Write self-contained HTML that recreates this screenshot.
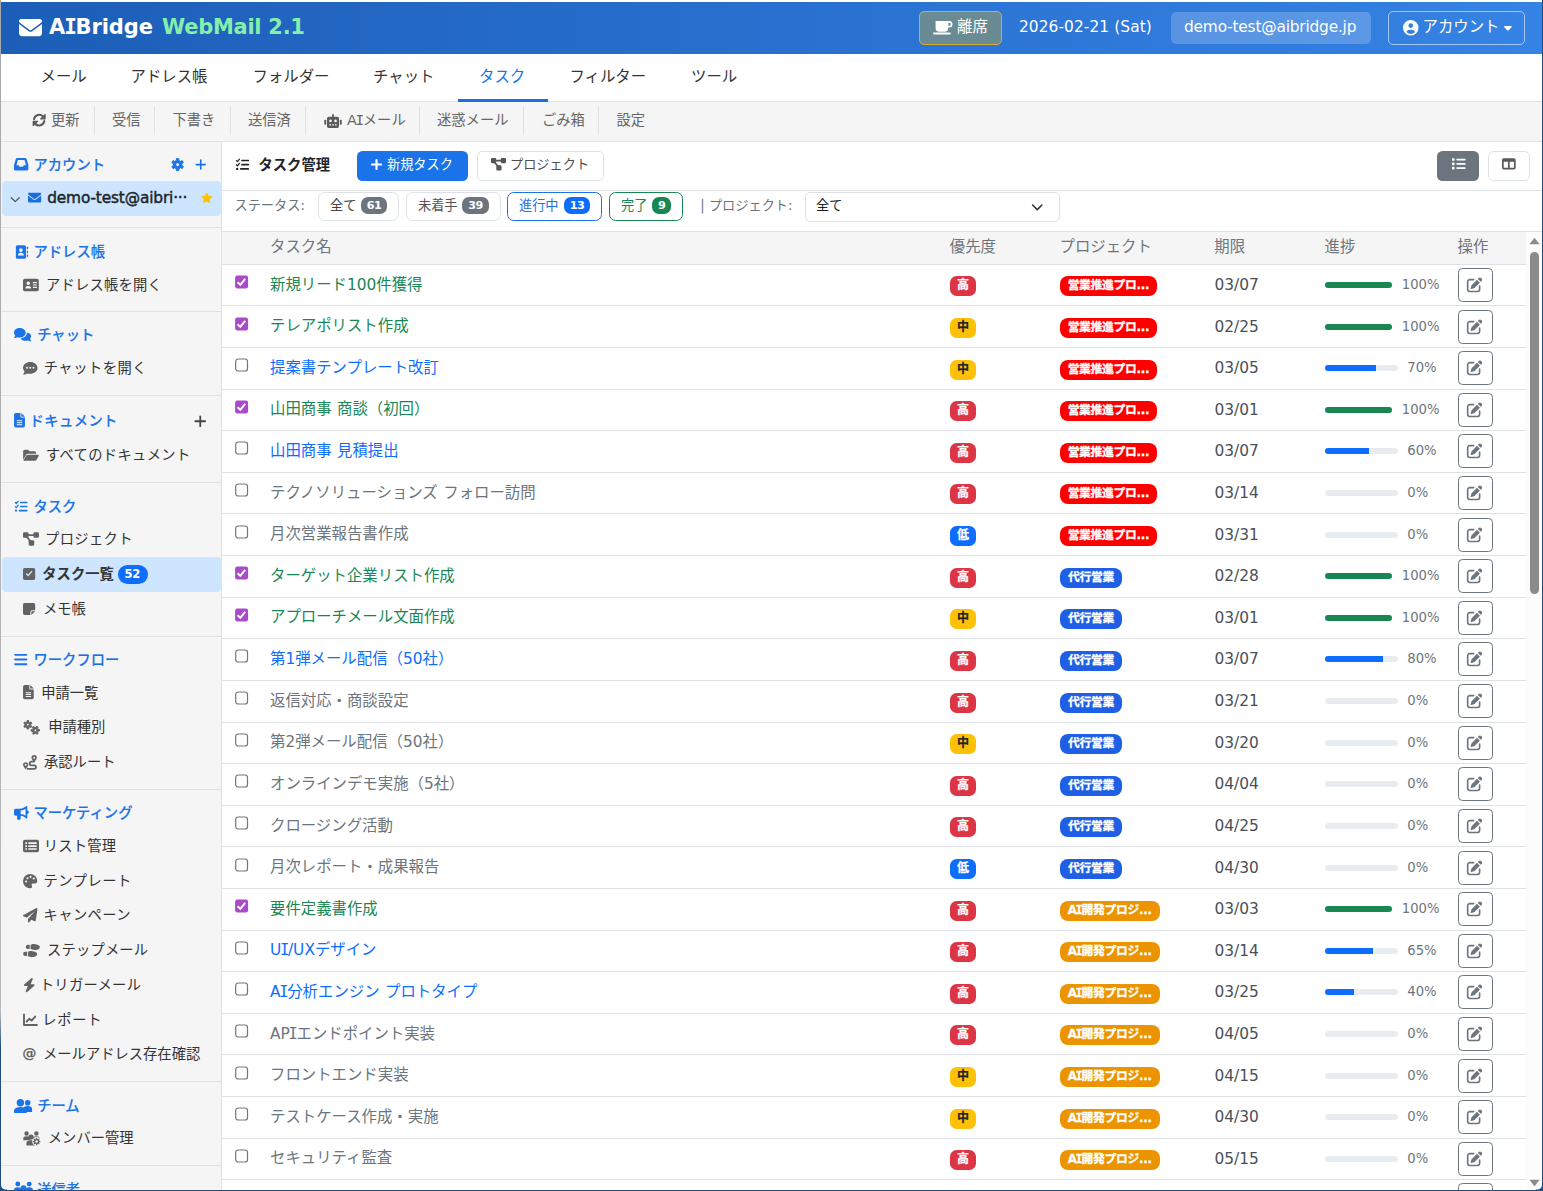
<!DOCTYPE html><html lang="ja"><head><meta charset="utf-8"><title>AIBridge WebMail 2.1</title><style>
*{box-sizing:border-box;margin:0;padding:0}
html,body{width:1543px;height:1191px;overflow:hidden;background:#fff}
body{font-family:"DejaVu Sans","Noto Sans CJK JP",sans-serif;color:#333;position:relative}
#root{position:absolute;left:0;top:0;width:1543px;height:1191px;overflow:hidden;background:#fff}
.a{position:absolute}
header,nav,aside,main,section{position:absolute;left:0;top:0;width:0;height:0;overflow:visible}
.i{position:absolute;display:block;overflow:visible}
.t{position:absolute;white-space:nowrap;height:24px;line-height:24px}
.hl{position:absolute;height:1px;background:#dee2e6}
.vl{position:absolute;width:1px;background:#dee2e6}
.b{font-weight:700}
.bd{position:absolute;border-radius:6.6px;color:#fff;font-weight:700;text-align:center;white-space:nowrap}
</style></head><body><div id="root">
<div class="a" style="left:0px;top:0px;width:1px;height:1191px;background:linear-gradient(180deg,#a9a9a9 0,#b9b9b9 85%,#1d5080 88%,#1d5080 100%)"></div>
<header>
<div class="a" style="left:1px;top:2px;width:1541px;height:52px;background:linear-gradient(90deg,#1c5eb7 0%,#2a72d2 55%,#3583e4 100%)"></div>
<svg class="i" style="left:18.5px;top:16.3px;color:#fff" width="23" height="23" viewBox="0 0 512 512" fill="currentColor" preserveAspectRatio="xMidYMid meet" ><path d="M48 64C21.5 64 0 85.5 0 112c0 15.1 7.1 29.3 19.2 38.4L236.8 313.6c11.4 8.5 27 8.5 38.4 0L492.8 150.4c12.1-9.1 19.2-23.3 19.2-38.4c0-26.5-21.5-48-48-48H48zM0 176V384c0 35.3 28.7 64 64 64H448c35.3 0 64-28.7 64-64V176L294.4 339.2c-22.8 17.1-54 17.1-76.8 0L0 176z"/></svg>
<h1 class="t b" style="left:49px;top:15.3px;font-size:21px;color:#fff;letter-spacing:-0.1px">A<span style="font-family:'DejaVu Sans Mono',monospace;letter-spacing:-1.2px;margin-left:-1px">I</span>Bridge <span style="color:#86efac;margin-left:2px;letter-spacing:-.28px">WebMail 2.1</span></h1>
<div class="a" style="left:919px;top:11px;width:83px;height:34px;background:#6a8b93;border:1px solid #d4ad33;border-radius:5px"></div>
<svg class="i" style="left:932.5px;top:20.5px;color:#fff" width="19.5" height="13.5" viewBox="0 0 19.5 13.5" fill="currentColor" preserveAspectRatio="xMidYMid meet" ><path d="M2.6 0H15.2V7a3.8 3.8 0 0 1-3.8 3.8H6.4A3.8 3.8 0 0 1 2.6 7Z"/><path fill-rule="evenodd" d="M14 0h2.2a3.3 3.3 0 0 1 0 6.6H14ZM15.2 1.8V4.8h1a1.5 1.5 0 0 0 0-3Z"/><rect x="0" y="11.4" width="17.8" height="2.1" rx="1"/></svg>
<span class="t " style="left:957px;top:15.3px;font-size:15.4px;color:#fff;">離席</span>
<span class="t " style="left:1019px;top:15px;font-size:15.4px;color:#fff;letter-spacing:.08px">2026-02-21 (Sat)</span>
<div class="a" style="left:1170.5px;top:12px;width:200.5px;height:32px;background:rgba(255,255,255,.2);border-radius:5px"></div>
<span class="t " style="left:1184px;top:15px;font-size:15.4px;color:#fff;letter-spacing:-.2px">demo-test@aibridge.jp</span>
<div class="a" style="left:1387.5px;top:11px;width:137.5px;height:34px;border:1px solid rgba(255,255,255,.55);border-radius:5px"></div>
<svg class="i" style="left:1402.5px;top:20px;color:#fff" width="15.5" height="15.5" viewBox="0 0 16 16" fill="currentColor" preserveAspectRatio="xMidYMid meet" ><path fill-rule="evenodd" d="M8 0a8 8 0 1 1 0 16A8 8 0 0 1 8 0ZM8 3.4a2.4 2.4 0 1 0 0 4.8 2.4 2.4 0 0 0 0-4.8ZM3.6 12.4A5.6 5.6 0 0 0 8 14.5a5.6 5.6 0 0 0 4.4-2.1C11.8 10.9 10.5 10 9 10H7c-1.5 0-2.8.9-3.4 2.4Z"/></svg>
<span class="t " style="left:1422.5px;top:15.3px;font-size:15.4px;color:#fff;">アカウント</span>
<svg class="i" style="left:1504px;top:20.8px;color:#fff" width="7.8" height="13" viewBox="0 0 320 512" fill="currentColor" preserveAspectRatio="xMidYMid meet" ><path d="M137.4 374.6c12.5 12.5 32.8 12.5 45.3 0l128-128c9.2-9.2 11.9-22.9 6.9-34.9s-16.6-19.8-29.6-19.8L32 192c-12.9 0-24.6 7.8-29.6 19.8s-2.2 25.7 6.9 34.9l128 128z"/></svg>
</header>
<nav>
<a class="t " style="left:40.5px;top:64.7px;font-size:15.4px;color:#333;">メール</a>
<a class="t " style="left:130.5px;top:64.7px;font-size:15.4px;color:#333;">アドレス帳</a>
<a class="t " style="left:252.5px;top:64.7px;font-size:15.4px;color:#333;">フォルダー</a>
<a class="t " style="left:373px;top:64.7px;font-size:15.4px;color:#333;">チャット</a>
<a class="t " style="left:479px;top:64.7px;font-size:15.4px;color:#1a73e8;">タスク</a>
<a class="t " style="left:569.5px;top:64.7px;font-size:15.4px;color:#333;">フィルター</a>
<a class="t " style="left:691px;top:64.7px;font-size:15.4px;color:#333;">ツール</a>
<div class="hl" style="left:1px;top:101px;width:1541px;background:#dee2e6"></div>
<div class="a" style="left:458px;top:99px;width:90px;height:3px;background:#1a6de3"></div>
</nav>
<section>
<div class="a" style="left:1px;top:102px;width:1541px;height:39px;background:#f5f5f5"></div>
<div class="hl" style="left:1px;top:141px;width:1541px;background:#dee2e6"></div>
<svg class="i" style="left:31.8px;top:113.4px;color:#5a5a5a" width="14.3" height="14.3" viewBox="0 0 16 16" fill="currentColor" preserveAspectRatio="xMidYMid meet" ><path d="M2.3 6.9A5.8 5.8 0 0 1 12.4 4" fill="none" stroke="currentColor" stroke-width="2.3" stroke-linecap="round"/><path d="M15.3 1.6V6.7a.7.7 0 0 1-.7.7H9.5a.6.6 0 0 1-.4-1L14.3 1.2a.6.6 0 0 1 1 .4Z"/><path d="M13.7 9.1A5.8 5.8 0 0 1 3.6 12" fill="none" stroke="currentColor" stroke-width="2.3" stroke-linecap="round"/><path d="M.7 14.4V9.3a.7.7 0 0 1 .7-.7H6.5a.6.6 0 0 1 .4 1L1.7 14.8a.6.6 0 0 1-1-.4Z"/></svg>
<span class="t " style="left:51px;top:108.3px;font-size:14.3px;color:#666;">更新</span>
<span class="t " style="left:112px;top:108.3px;font-size:14.3px;color:#666;">受信</span>
<span class="t " style="left:172.5px;top:108.3px;font-size:14.3px;color:#666;">下書き</span>
<span class="t " style="left:248px;top:108.3px;font-size:14.3px;color:#666;">送信済</span>
<span class="t " style="left:347px;top:108.3px;font-size:14.3px;color:#666;">A<span style="font-family:'DejaVu Sans Mono',monospace;margin-left:-1.3px;letter-spacing:-1.3px">I</span>メール</span>
<span class="t " style="left:437px;top:108.3px;font-size:14.3px;color:#666;">迷惑メール</span>
<span class="t " style="left:542px;top:108.3px;font-size:14.3px;color:#666;">ごみ箱</span>
<span class="t " style="left:616.5px;top:108.3px;font-size:14.3px;color:#666;">設定</span>
<svg class="i" style="left:324px;top:113.5px;color:#5a5a5a" width="18" height="14.4" viewBox="0 0 20 16" fill="currentColor" preserveAspectRatio="xMidYMid meet" ><path fill-rule="evenodd" d="M9 0.3h2V3H14.7a2 2 0 0 1 2 2v8.7a2 2 0 0 1-2 2H5.3a2 2 0 0 1-2-2V5a2 2 0 0 1 2-2H9ZM7.2 6.2a1.5 1.5 0 1 0 0 3 1.5 1.5 0 0 0 0-3ZM12.8 6.2a1.5 1.5 0 1 0 0 3 1.5 1.5 0 0 0 0-3ZM5.9 11.3v1.4h1.9v-1.4ZM9.05 11.3v1.4h1.9v-1.4ZM12.2 11.3v1.4h1.9v-1.4Z"/><rect x="0.3" y="6.4" width="2.1" height="5.6" rx="0.9"/><rect x="17.6" y="6.4" width="2.1" height="5.6" rx="0.9"/></svg>
<div class="vl" style="left:94px;top:106px;height:29px;background:#dee2e6"></div>
<div class="vl" style="left:154px;top:106px;height:29px;background:#dee2e6"></div>
<div class="vl" style="left:230px;top:106px;height:29px;background:#dee2e6"></div>
<div class="vl" style="left:305px;top:106px;height:29px;background:#dee2e6"></div>
<div class="vl" style="left:419px;top:106px;height:29px;background:#dee2e6"></div>
<div class="vl" style="left:523px;top:106px;height:29px;background:#dee2e6"></div>
<div class="vl" style="left:598px;top:106px;height:29px;background:#dee2e6"></div>
</section>
<aside>
<div class="a" style="left:1px;top:142px;width:220px;height:1049px;background:#f5f5f5"></div>
<div class="vl" style="left:221px;top:142px;height:1049px;background:#dee2e6"></div>
<svg class="i" style="left:14.2px;top:158.39999999999998px;color:#1a73e8" width="14.4" height="12.6" viewBox="0 0 16 14" fill="currentColor" preserveAspectRatio="xMidYMid meet" ><path fill-rule="evenodd" d="M3.6 0h8.8a1.8 1.8 0 0 1 1.7 1.3L16 8v4.2a1.8 1.8 0 0 1-1.8 1.8H1.8A1.8 1.8 0 0 1 0 12.2V8L1.9 1.3A1.8 1.8 0 0 1 3.6 0ZM4.3 2.3 2.7 8H5.2l.9 1.8h3.8L10.8 8h2.5L11.7 2.3Z"/></svg>
<span class="t " style="left:33.5px;top:152.7px;font-size:14.3px;color:#1a73e8;font-weight:500;-webkit-text-stroke:.12px #1a73e8">アカウント</span>
<svg class="i" style="left:170.5px;top:158px;color:#1a73e8" width="13.2" height="13.2" viewBox="0 0 16 16" fill="currentColor" preserveAspectRatio="xMidYMid meet" ><path fill-rule="evenodd" stroke="currentColor" stroke-width="1.2" stroke-linejoin="round" d="M6.47 2.93 L6.61 0.73 L9.39 0.73 L9.53 2.93 L11.63 4.14 L13.6 3.16 L14.99 5.57 L13.16 6.79 L13.16 9.21 L14.99 10.43 L13.6 12.84 L11.63 11.86 L9.53 13.07 L9.39 15.27 L6.61 15.27 L6.47 13.07 L4.37 11.86 L2.4 12.84 L1.01 10.43 L2.84 9.21 L2.84 6.79 L1.01 5.57 L2.4 3.16 L4.37 4.14ZM10.3 8A2.3 2.3 0 1 0 5.7 8A2.3 2.3 0 1 0 10.3 8Z"/></svg>
<svg class="i" style="left:195.3px;top:157.7px;color:#1a73e8" width="11.5" height="13.2" viewBox="0 0 448 512" fill="currentColor" preserveAspectRatio="xMidYMid meet" ><path d="M256 80c0-17.7-14.3-32-32-32s-32 14.3-32 32V224H48c-17.7 0-32 14.3-32 32s14.3 32 32 32H192V432c0 17.7 14.3 32 32 32s32-14.3 32-32V288H400c17.7 0 32-14.3 32-32s-14.3-32-32-32H256V80z"/></svg>
<div class="a" style="left:1.5px;top:181px;width:219.5px;height:35px;background:#cde5fe;border-radius:4px"></div>
<svg class="i" style="left:10px;top:192.7px;color:#5a5a5a" width="10.5" height="12" viewBox="0 0 512 512" fill="currentColor" preserveAspectRatio="xMidYMid meet" ><path d="M233.4 406.6c12.5 12.5 32.8 12.5 45.3 0l192-192c12.5-12.5 12.5-32.8 0-45.3s-32.8-12.5-45.3 0L256 338.7 86.6 169.4c-12.5-12.5-32.8-12.5-45.3 0s-12.5 32.8 0 45.3l192 192z"/></svg>
<svg class="i" style="left:27.6px;top:190.9px;color:#1a6fe0" width="13.2" height="13.2" viewBox="0 0 512 512" fill="currentColor" preserveAspectRatio="xMidYMid meet" ><path d="M48 64C21.5 64 0 85.5 0 112c0 15.1 7.1 29.3 19.2 38.4L236.8 313.6c11.4 8.5 27 8.5 38.4 0L492.8 150.4c12.1-9.1 19.2-23.3 19.2-38.4c0-26.5-21.5-48-48-48H48zM0 176V384c0 35.3 28.7 64 64 64H448c35.3 0 64-28.7 64-64V176L294.4 339.2c-22.8 17.1-54 17.1-76.8 0L0 176z"/></svg>
<span class="t " style="left:47.2px;top:186px;font-size:15.4px;color:#212529;-webkit-text-stroke:.45px #212529;letter-spacing:-.17px">demo-test@aibri···</span>
<svg class="i" style="left:201px;top:192.3px;color:#ffc107" width="11.5" height="11.5" viewBox="0 0 576 512" fill="currentColor" preserveAspectRatio="xMidYMid meet" ><path d="M316.9 18C311.6 7 300.4 0 288.1 0s-23.4 7-28.8 18L195 150.3 51.4 171.5c-12 1.8-22 10.2-25.7 21.7s-.7 24.2 7.9 32.7L137.8 329 113.2 474.7c-2 12 3 24.2 12.9 31.3s23 8 33.8 2.3l128.3-68.5 128.3 68.5c10.8 5.7 23.9 4.9 33.8-2.3s14.9-19.3 12.9-31.3L438.5 329 542.7 225.9c8.6-8.5 11.7-21.2 7.9-32.7s-13.7-19.9-25.7-21.7L381.2 150.3 316.9 18z"/></svg>
<div class="hl" style="left:1px;top:227px;width:220px;background:#dee2e6"></div>
<svg class="i" style="left:14.8px;top:245.1px;color:#1a73e8" width="13.5" height="13.8" viewBox="0 0 16 16" fill="currentColor" preserveAspectRatio="xMidYMid meet" ><path fill-rule="evenodd" d="M2.8 0H11.2A1.8 1.8 0 0 1 13 1.8V14.2A1.8 1.8 0 0 1 11.2 16H2.8A1.8 1.8 0 0 1 1 14.2V1.8A1.8 1.8 0 0 1 2.8 0ZM7 3.8a2.1 2.1 0 1 0 0 4.2 2.1 2.1 0 0 0 0-4.2ZM3.5 12.2h7c0-1.9-1.3-3.2-2.8-3.2H6.3c-1.5 0-2.8 1.3-2.8 3.2Z"/><rect x="14" y="2" width="1.5" height="3" rx=".5"/><rect x="14" y="6.5" width="1.5" height="3" rx=".5"/><rect x="14" y="11" width="1.5" height="3" rx=".5"/></svg>
<span class="t " style="left:33.5px;top:240px;font-size:14.3px;color:#1a73e8;font-weight:500;-webkit-text-stroke:.12px #1a73e8">アドレス帳</span>
<svg class="i" style="left:23px;top:277.5px;color:#636363" width="15.8" height="14" viewBox="0 0 18 14" fill="currentColor" preserveAspectRatio="xMidYMid meet" ><path fill-rule="evenodd" d="M2 0H16a2 2 0 0 1 2 2V12a2 2 0 0 1-2 2H2a2 2 0 0 1-2-2V2A2 2 0 0 1 2 0ZM6 3a2 2 0 1 0 0 4 2 2 0 0 0 0-4ZM2.6 11h6.8c0-1.8-1.2-3-2.6-3H5.2c-1.4 0-2.6 1.2-2.6 3ZM11.2 3.6v1.3h4.6V3.6ZM11.2 6.3v1.3h4.6V6.3ZM11.2 9v1.3h4.6V9Z"/></svg>
<span class="t " style="left:46px;top:272.5px;font-size:14.3px;color:#333;letter-spacing:0.2px">アドレス帳を開く</span>
<div class="hl" style="left:1px;top:311px;width:220px;background:#dee2e6"></div>
<svg class="i" style="left:14.2px;top:327.25px;color:#1a73e8" width="18" height="14.5" viewBox="0 0 20 16" fill="currentColor" preserveAspectRatio="xMidYMid meet" ><path d="M6.5 1C2.9 1 0 3.3 0 6.2c0 1.2.5 2.3 1.4 3.2C1.1 10.3.5 11.1.1 11.6c-.2.3 0 .6.3.6 1.3 0 2.5-.5 3.3-1 .9.3 1.8.4 2.8.4 3.6 0 6.5-2.4 6.5-5.3S10.1 1 6.5 1Z"/><path d="M14.3 6.4c0 3.4-3.2 6-7 6.3 1 1.6 3.1 2.6 5.5 2.6.9 0 1.8-.1 2.6-.4.8.5 2 1 3.3 1 .3 0 .5-.400.3-.600-.4-.5-1-1.3-1.3-2.2.8-.8 1.3-1.8 1.3-2.9 0-2.1-2-3.8-4.7-3.8Z"/></svg>
<span class="t " style="left:37.2px;top:322.5px;font-size:14.3px;color:#1a73e8;font-weight:500;-webkit-text-stroke:.12px #1a73e8">チャット</span>
<svg class="i" style="left:23px;top:360.55px;color:#636363" width="14.5" height="14.5" viewBox="0 0 16 16" fill="currentColor" preserveAspectRatio="xMidYMid meet" ><path fill-rule="evenodd" d="M8 1C3.6 1 0 3.9 0 7.5c0 1.5.7 2.9 1.8 4-.4 1.2-1.1 2.2-1.6 2.8-.3.3 0 .700.4.700 1.7 0 3.1-.7 4-1.3 1.1.3 2.2.5 3.4.5 4.4 0 8-2.9 8-6.7S12.4 1 8 1ZM4.4 6.4a1.1 1.1 0 1 0 0 2.2 1.1 1.1 0 0 0 0-2.2ZM8 6.4a1.1 1.1 0 1 0 0 2.2 1.1 1.1 0 0 0 0-2.2ZM11.6 6.4a1.1 1.1 0 1 0 0 2.2 1.1 1.1 0 0 0 0-2.2Z"/></svg>
<span class="t " style="left:43.7px;top:355.8px;font-size:14.3px;color:#333;letter-spacing:0.5px">チャットを開く</span>
<div class="hl" style="left:1px;top:395px;width:220px;background:#dee2e6"></div>
<svg class="i" style="left:14.2px;top:413.35px;color:#1a73e8" width="11" height="14.5" viewBox="0 0 12 16" fill="currentColor" preserveAspectRatio="xMidYMid meet" ><path fill-rule="evenodd" d="M2 0H7V3.5A1.5 1.5 0 0 0 8.5 5H12V14a2 2 0 0 1-2 2H2a2 2 0 0 1-2-2V2A2 2 0 0 1 2 0ZM8 0 12 4H8.5A.5.5 0 0 1 8 3.5ZM3 8v1.1h6V8ZM3 10.2v1.1h6v-1.1ZM3 12.4v1.1h6v-1.1Z"/></svg>
<span class="t " style="left:29.6px;top:408.6px;font-size:14.3px;color:#1a73e8;font-weight:500;-webkit-text-stroke:.12px #1a73e8;letter-spacing:0.4px">ドキュメント</span>
<svg class="i" style="left:193.5px;top:413.5px;color:#444" width="12.5" height="14.5" viewBox="0 0 448 512" fill="currentColor" preserveAspectRatio="xMidYMid meet" ><path d="M256 80c0-17.7-14.3-32-32-32s-32 14.3-32 32V224H48c-17.7 0-32 14.3-32 32s14.3 32 32 32H192V432c0 17.7 14.3 32 32 32s32-14.3 32-32V288H400c17.7 0 32-14.3 32-32s-14.3-32-32-32H256V80z"/></svg>
<svg class="i" style="left:23px;top:447.8px;color:#636363" width="16" height="14" viewBox="0 0 18 16" fill="currentColor" preserveAspectRatio="xMidYMid meet" ><path d="M1.8 2H5.6L7.4 3.8H13a1.8 1.8 0 0 1 1.8 1.8V6.5H5.2A2 2 0 0 0 3.4 7.6L0 13.5V3.8A1.8 1.8 0 0 1 1.8 2Z"/><path d="M5.2 7.7H17a.9.9 0 0 1 .8 1.3l-2.6 4.6a1.8 1.8 0 0 1-1.6.9H1a.6.6 0 0 1-.5-.9L3.6 8.6A1.8 1.8 0 0 1 5.2 7.7Z"/></svg>
<span class="t " style="left:45.8px;top:442.8px;font-size:14.3px;color:#333;letter-spacing:0.34px">すべてのドキュメント</span>
<div class="hl" style="left:1px;top:482px;width:220px;background:#dee2e6"></div>
<svg class="i" style="left:14.2px;top:500px;color:#1a73e8" width="14.2" height="13" viewBox="0 0 16 16" fill="currentColor" preserveAspectRatio="xMidYMid meet" ><path d="M.9 3.1 2.1 4.3 4.5 1.4" fill="none" stroke="currentColor" stroke-width="1.5" stroke-linecap="round" stroke-linejoin="round"/><path d="M.9 8.1 2.1 9.3 4.5 6.4" fill="none" stroke="currentColor" stroke-width="1.5" stroke-linecap="round" stroke-linejoin="round"/><rect x="6.5" y="2" width="9.5" height="2" rx="1"/><rect x="6.5" y="7" width="9.5" height="2" rx="1"/><rect x="5" y="12" width="11" height="2" rx="1"/><circle cx="1.7" cy="13" r="1.4"/></svg>
<span class="t " style="left:33.5px;top:494.5px;font-size:14.3px;color:#1a73e8;font-weight:500;-webkit-text-stroke:.12px #1a73e8">タスク</span>
<svg class="i" style="left:23px;top:532.2px;color:#636363" width="16" height="14" viewBox="0 0 18 15" fill="currentColor" preserveAspectRatio="xMidYMid meet" ><rect x="0" y="0" width="6.2" height="6.2" rx="1.3"/><rect x="11.8" y="0" width="6.2" height="6.2" rx="1.3"/><rect x="6.4" y="8.8" width="6.2" height="6.2" rx="1.3"/><path d="M5 3.1H13M4.4 5 8.3 10.2" fill="none" stroke="currentColor" stroke-width="2"/></svg>
<span class="t " style="left:45px;top:527.2px;font-size:14.3px;color:#333;letter-spacing:0.35px">プロジェクト</span>
<div class="a" style="left:1.5px;top:557px;width:219.5px;height:35px;background:#cde5fe;border-radius:4px"></div>
<svg class="i" style="left:23px;top:567.3px;color:#636363" width="12.2" height="14" viewBox="0 0 14 16" fill="currentColor" preserveAspectRatio="xMidYMid meet" ><path fill-rule="evenodd" d="M2 1H12a2 2 0 0 1 2 2V13a2 2 0 0 1-2 2H2a2 2 0 0 1-2-2V3A2 2 0 0 1 2 1ZM10.9 5.2 9.8 4.2 6 8.7 4.2 6.9 3.1 8 6.1 11Z"/></svg>
<span class="t b" style="left:42.3px;top:562.3px;font-size:14.3px;color:#333;">タスク一覧</span>
<div class="a" style="left:118px;top:565px;width:30px;height:18.7px;background:#0d6efd;border-radius:9.4px"></div>
<span class="t b" style="left:124.5px;top:562.3px;font-size:11.5px;color:#fff;letter-spacing:-.3px">52</span>
<svg class="i" style="left:23px;top:602px;color:#636363" width="12.2" height="14" viewBox="0 0 14 16" fill="currentColor" preserveAspectRatio="xMidYMid meet" ><path d="M2 1H12a2 2 0 0 1 2 2V9.5H10.5A2 2 0 0 0 8.5 11.5V15H2a2 2 0 0 1-2-2V3A2 2 0 0 1 2 1ZM14 10.6 9.6 15V11.5a.9.9 0 0 1 .9-.9Z"/></svg>
<span class="t " style="left:43px;top:597px;font-size:14.3px;color:#333;">メモ帳</span>
<div class="hl" style="left:1px;top:636px;width:220px;background:#dee2e6"></div>
<svg class="i" style="left:14.2px;top:652.3px;color:#1a73e8" width="13.5" height="15" viewBox="0 0 448 512" fill="currentColor" preserveAspectRatio="xMidYMid meet" ><path d="M0 96C0 78.3 14.3 64 32 64H416c17.7 0 32 14.3 32 32s-14.3 32-32 32H32C14.3 128 0 113.7 0 96zM0 256c0-17.7 14.3-32 32-32H416c17.7 0 32 14.3 32 32s-14.3 32-32 32H32c-17.7 0-32-14.3-32-32zM448 416c0 17.7-14.3 32-32 32H32c-17.7 0-32-14.3-32-32s14.3-32 32-32H416c17.7 0 32 14.3 32 32z"/></svg>
<span class="t " style="left:33.5px;top:647.8px;font-size:14.3px;color:#1a73e8;font-weight:500;-webkit-text-stroke:.12px #1a73e8">ワークフロー</span>
<svg class="i" style="left:23px;top:685.35px;color:#636363" width="10.8" height="14.3" viewBox="0 0 12 16" fill="currentColor" preserveAspectRatio="xMidYMid meet" ><path fill-rule="evenodd" d="M2 0H7V3.5A1.5 1.5 0 0 0 8.5 5H12V14a2 2 0 0 1-2 2H2a2 2 0 0 1-2-2V2A2 2 0 0 1 2 0ZM8 0 12 4H8.5A.5.5 0 0 1 8 3.5ZM3 8v1.1h6V8ZM3 10.2v1.1h6v-1.1ZM3 12.4v1.1h6v-1.1Z"/></svg>
<span class="t " style="left:41.2px;top:680.5px;font-size:14.3px;color:#333;">申請一覧</span>
<svg class="i" style="left:23px;top:719.55px;color:#636363" width="17.5" height="15.5" viewBox="0 0 19 17" fill="currentColor" preserveAspectRatio="xMidYMid meet" ><path fill-rule="evenodd" stroke="currentColor" stroke-width="1" stroke-linejoin="round" d="M4.25 2.04 L4.32 0.58 L6.08 0.58 L6.15 2.04 L7.46 2.79 L8.76 2.13 L9.64 3.65 L8.41 4.45 L8.41 5.95 L9.64 6.75 L8.76 8.27 L7.46 7.61 L6.15 8.36 L6.08 9.82 L4.32 9.82 L4.25 8.36 L2.94 7.61 L1.64 8.27 L0.76 6.75 L1.99 5.95 L1.99 4.45 L0.76 3.65 L1.64 2.13 L2.94 2.79ZM6.7 5.2A1.5 1.5 0 1 0 3.7 5.2A1.5 1.5 0 1 0 6.7 5.2Z"/><path fill-rule="evenodd" stroke="currentColor" stroke-width="1" stroke-linejoin="round" d="M14.08 8.07 L14.84 6.83 L16.39 7.67 L15.75 8.98 L16.54 10.27 L17.99 10.31 L18.04 12.07 L16.58 12.18 L15.86 13.5 L16.55 14.78 L15.05 15.7 L14.23 14.49 L12.72 14.53 L11.96 15.77 L10.41 14.93 L11.05 13.62 L10.26 12.33 L8.81 12.29 L8.76 10.53 L10.22 10.42 L10.94 9.1 L10.25 7.82 L11.75 6.9 L12.57 8.11ZM14.9 11.3A1.5 1.5 0 1 0 11.9 11.3A1.5 1.5 0 1 0 14.9 11.3Z"/></svg>
<span class="t " style="left:48.2px;top:715.3px;font-size:14.3px;color:#333;">申請種別</span>
<svg class="i" style="left:23px;top:755.15px;color:#636363" width="14.3" height="14.3" viewBox="0 0 16 16" fill="currentColor" preserveAspectRatio="xMidYMid meet" ><path fill-rule="evenodd" d="M12.5 0a3 3 0 0 1 3 3c0 1.7-3 5-3 5s-3-3.3-3-5a3 3 0 0 1 3-3ZM12.5 1.9a1.1 1.1 0 1 0 0 2.2 1.1 1.1 0 0 0 0-2.2ZM3 8a3 3 0 0 1 3 3c0 1.7-3 5-3 5S0 12.7 0 11A3 3 0 0 1 3 8ZM3 9.9a1.1 1.1 0 1 0 0 2.2 1.1 1.1 0 0 0 0-2.2Z"/><path d="M12 7.5H9.5a2 2 0 0 0 0 4h3a2 2 0 0 1 0 4H5" fill="none" stroke="currentColor" stroke-width="2" stroke-linecap="round"/></svg>
<span class="t " style="left:44px;top:750.3px;font-size:14.3px;color:#333;">承認ルート</span>
<div class="hl" style="left:1px;top:789px;width:220px;background:#dee2e6"></div>
<svg class="i" style="left:14.2px;top:806.1px;color:#1a73e8" width="14.2" height="14.2" viewBox="0 0 16 16" fill="currentColor" preserveAspectRatio="xMidYMid meet" ><path d="M14 0a1 1 0 0 1 1 1V5.2a1.8 1.8 0 0 1 0 3.6V13a1 1 0 0 1-1.7.7C11.8 12.2 9.8 11.3 7.5 11.1V14.5a1 1 0 0 1-1 1h-2a1 1 0 0 1-1-1V11H2a2 2 0 0 1-2-2V5A2 2 0 0 1 2 3H6.5C9.2 3 11.6 2 13.3.3A1 1 0 0 1 14 0ZM13 3.1C11.5 4.2 9.6 4.9 7.5 5V9c2.1.1 4 .800 5.5 1.9Z" fill-rule="evenodd"/></svg>
<span class="t " style="left:33.5px;top:801.2px;font-size:14.3px;color:#1a73e8;font-weight:500;-webkit-text-stroke:.12px #1a73e8">マーケティング</span>
<svg class="i" style="left:23px;top:838.9px;color:#636363" width="16" height="14.2" viewBox="0 0 18 14" fill="currentColor" preserveAspectRatio="xMidYMid meet" ><path fill-rule="evenodd" d="M2 0H16a2 2 0 0 1 2 2V12a2 2 0 0 1-2 2H2a2 2 0 0 1-2-2V2A2 2 0 0 1 2 0ZM2.6 2.8v1.8h1.9V2.8ZM6 2.8v1.8h9.4V2.8ZM2.6 6.1v1.8h1.9V6.1ZM6 6.1v1.8h9.4V6.1ZM2.6 9.4v1.8h1.9V9.4ZM6 9.4v1.8h9.4V9.4Z"/></svg>
<span class="t " style="left:43.7px;top:834px;font-size:14.3px;color:#333;letter-spacing:0.25px">リスト管理</span>
<svg class="i" style="left:23px;top:873.65px;color:#636363" width="14.3" height="14.3" viewBox="0 0 16 16" fill="currentColor" preserveAspectRatio="xMidYMid meet" ><path fill-rule="evenodd" d="M8 0a8 8 0 0 1 8 8c0 2-1.6 2.5-3 2.5h-2a1.5 1.5 0 0 0-1.3 2.2c.2.4.5.8.5 1.3A2 2 0 0 1 8 16 8 8 0 0 1 8 0ZM3.5 7.2a1.2 1.2 0 1 0 0 2.4 1.2 1.2 0 0 0 0-2.4ZM5 3.5a1.2 1.2 0 1 0 0 2.4A1.2 1.2 0 0 0 5 3.5ZM8.5 2a1.2 1.2 0 1 0 0 2.4A1.2 1.2 0 0 0 8.5 2ZM12 3.8a1.2 1.2 0 1 0 0 2.4 1.2 1.2 0 0 0 0-2.4Z"/></svg>
<span class="t " style="left:43.6px;top:868.8px;font-size:14.3px;color:#333;letter-spacing:0.45px">テンプレート</span>
<svg class="i" style="left:22.8px;top:908.05px;color:#636363" width="14.5" height="14.5" viewBox="0 0 16 16" fill="currentColor" preserveAspectRatio="xMidYMid meet" ><path d="M15.6.2a.8.8 0 0 1 .4.8L14 14a.8.8 0 0 1-1.1.6L9 13l-2 2.6A.8.8 0 0 1 5.5 15V12L13 3.5 4 10.8.5 9.1A.8.8 0 0 1 .5 7.6L14.8.1a.8.8 0 0 1 .8.1Z"/></svg>
<span class="t " style="left:43.5px;top:903.3px;font-size:14.3px;color:#333;letter-spacing:0.4px">キャンペーン</span>
<svg class="i" style="left:22.8px;top:943.1px;color:#636363" width="17.8" height="14.2" viewBox="0 0 20 16" fill="currentColor" preserveAspectRatio="xMidYMid meet" ><path d="M11.5 1C14.5 1 19 2 19 4.5S15.5 8 12.5 8c-1.5 0-2.5-.8-4-1.1V2C9.5 1.7 10.2 1 11.5 1ZM5.5 2H7.5V6.8H5.5A2.4 2.4 0 0 1 5.5 2Z"/><path d="M8.5 9C11.5 9 16 10 16 12.5S12.5 16 9.5 16c-1.5 0-2.5-.8-4-1.1V10C6.5 9.7 7.2 9 8.5 9ZM2.5 10H4.5V14.8H2.5A2.4 2.4 0 0 1 2.5 10Z"/></svg>
<span class="t " style="left:46.9px;top:938.2px;font-size:14.3px;color:#333;letter-spacing:0.2px">ステップメール</span>
<svg class="i" style="left:22.8px;top:978.15px;color:#636363" width="12.5" height="14.3" viewBox="0 0 448 512" fill="currentColor" preserveAspectRatio="xMidYMid meet" ><path d="M349.4 44.6c5.9-13.7 1.5-29.7-10.6-38.5s-28.6-8-39.9 1.8l-256 224c-10 8.8-13.6 22.9-8.9 35.3S50.7 288 64 288H175.5L98.6 467.4c-5.9 13.7-1.5 29.7 10.6 38.5s28.6 8 39.9-1.8l256-224c10-8.8 13.6-22.9 8.9-35.3s-16.6-20.7-30-20.7H272.5L349.4 44.6z"/></svg>
<span class="t " style="left:39.7px;top:973.3px;font-size:14.3px;color:#333;letter-spacing:0.3px">トリガーメール</span>
<svg class="i" style="left:22.8px;top:1012.5500000000001px;color:#636363" width="14.5" height="14.3" viewBox="0 0 16 16" fill="currentColor" preserveAspectRatio="xMidYMid meet" ><path d="M1 1.5V13.5H15.5" fill="none" stroke="currentColor" stroke-width="2.1" stroke-linecap="round" stroke-linejoin="round"/><path d="M4 9.5 7 6.5 9.5 8.5 13.5 4" fill="none" stroke="currentColor" stroke-width="2.1" stroke-linecap="round" stroke-linejoin="round"/></svg>
<span class="t " style="left:42.3px;top:1007.7px;font-size:14.3px;color:#333;letter-spacing:0.7px">レポート</span>
<span class="t b" style="left:22.2px;top:1041.3px;font-size:14.3px;color:#636363;">@</span>
<span class="t " style="left:43px;top:1042.4px;font-size:14.3px;color:#333;">メールアドレス存在確認</span>
<div class="hl" style="left:1px;top:1081px;width:220px;background:#dee2e6"></div>
<svg class="i" style="left:14px;top:1098.95px;color:#1a73e8" width="18.2" height="14.5" viewBox="0 0 18 14.5" fill="currentColor" preserveAspectRatio="xMidYMid meet" ><path d="M10 3.7A3.7 3.7 0 1 1 2.6 3.7A3.7 3.7 0 1 1 10 3.7ZM0 13.9V11.25A6.3 3.25 0 0 1 12.6 11.25V13.9Z"/><path d="M16.4 3.7A2.8 2.8 0 1 1 10.8 3.7A2.8 2.8 0 1 1 16.4 3.7ZM9.2 12.9V10.29A4.4 3.19 0 0 1 18 10.29V12.9Z"/></svg>
<span class="t " style="left:37.2px;top:1094.2px;font-size:14.3px;color:#1a73e8;font-weight:500;-webkit-text-stroke:.12px #1a73e8">チーム</span>
<svg class="i" style="left:22.8px;top:1131.1499999999999px;color:#636363" width="17.8" height="14.3" viewBox="0 0 20 16" fill="currentColor" preserveAspectRatio="xMidYMid meet" ><path d="M6.5 2.8A2.5 2.5 0 1 1 1.5 2.8A2.5 2.5 0 1 1 6.5 2.8ZM0.3 10.3V8.32A3.7 2.42 0 0 1 7.7 8.32V10.3Z"/><path d="M17.5 2.8A2.5 2.5 0 1 1 12.5 2.8A2.5 2.5 0 1 1 17.5 2.8ZM11.3 10.3V8.32A3.7 2.42 0 0 1 18.7 8.32V10.3Z"/><path d="M12 6.8A3 3 0 1 1 6 6.8A3 3 0 1 1 12 6.8ZM3.8 16.4V13.7A5.2 3.3 0 0 1 14.2 13.7V16.4Z"/><circle cx="15.3" cy="11.8" r="5" fill="#f5f5f5"/><path fill-rule="evenodd" d="M18.2 11.03 L19.44 11.11 L19.44 12.49 L18.2 12.57 L17.89 13.31 L18.72 14.24 L17.74 15.22 L16.81 14.39 L16.07 14.7 L15.99 15.94 L14.61 15.94 L14.53 14.7 L13.79 14.39 L12.86 15.22 L11.88 14.24 L12.71 13.31 L12.4 12.57 L11.16 12.49 L11.16 11.11 L12.4 11.03 L12.71 10.29 L11.88 9.36 L12.86 8.38 L13.79 9.21 L14.53 8.9 L14.61 7.66 L15.99 7.66 L16.07 8.9 L16.81 9.21 L17.74 8.38 L18.72 9.36 L17.89 10.29ZM16.7 11.8A1.4 1.4 0 1 0 13.9 11.8A1.4 1.4 0 1 0 16.7 11.8Z"/></svg>
<span class="t " style="left:47.8px;top:1126.3px;font-size:14.3px;color:#333;">メンバー管理</span>
<div class="hl" style="left:1px;top:1165px;width:220px;background:#dee2e6"></div>
<svg class="i" style="left:13.6px;top:1181.2px;color:#1a73e8" width="19" height="15.5" viewBox="0 0 20 16" fill="currentColor" preserveAspectRatio="xMidYMid meet" ><path d="M6.6 3.1A2.6 2.6 0 1 1 1.4 3.1A2.6 2.6 0 1 1 6.6 3.1ZM0.2 10.9V8.83A3.8 2.53 0 0 1 7.8 8.83V10.9Z"/><path d="M18.6 3.1A2.6 2.6 0 1 1 13.4 3.1A2.6 2.6 0 1 1 18.6 3.1ZM12.2 10.9V8.83A3.8 2.53 0 0 1 19.8 8.83V10.9Z"/><path d="M13.1 7.3A3.1 3.1 0 1 1 6.9 7.3A3.1 3.1 0 1 1 13.1 7.3ZM4.75 16.6V14.08A5.25 3.08 0 0 1 15.25 14.08V16.6Z"/></svg>
<span class="t " style="left:37.2px;top:1178px;font-size:14.3px;color:#1a73e8;font-weight:500;-webkit-text-stroke:.12px #1a73e8">送信者</span>
</aside>
<main>
<svg class="i" style="left:234.6px;top:158.2px;color:#222" width="14.8" height="13.4" viewBox="0 0 16 16" fill="currentColor" preserveAspectRatio="xMidYMid meet" ><path d="M.9 3.1 2.1 4.3 4.5 1.4" fill="none" stroke="currentColor" stroke-width="1.5" stroke-linecap="round" stroke-linejoin="round"/><path d="M.9 8.1 2.1 9.3 4.5 6.4" fill="none" stroke="currentColor" stroke-width="1.5" stroke-linecap="round" stroke-linejoin="round"/><rect x="6.5" y="2" width="9.5" height="2" rx="1"/><rect x="6.5" y="7" width="9.5" height="2" rx="1"/><rect x="5" y="12" width="11" height="2" rx="1"/><circle cx="1.7" cy="13" r="1.4"/></svg>
<h2 class="t b" style="left:258.5px;top:153.3px;font-size:14.3px;color:#212529;">タスク管理</h2>
<div class="a" style="left:357px;top:151px;width:111px;height:30px;background:#1a73e8;border-radius:5.5px"></div>
<svg class="i" style="left:371px;top:159px" width="11" height="11" viewBox="0 0 11 11"><path d="M5.5 1V10M1 5.5H10" stroke="#fff" stroke-width="2.2" stroke-linecap="round" fill="none"/></svg>
<span class="t " style="left:387px;top:153.3px;font-size:13.2px;color:#fff;">新規タスク</span>
<div class="a" style="left:477px;top:151px;width:126.7px;height:30px;background:#fff;border:1px solid #dee2e6;border-radius:5px"></div>
<svg class="i" style="left:490.8px;top:158px;color:#555" width="15" height="12.5" viewBox="0 0 18 15" fill="currentColor" preserveAspectRatio="xMidYMid meet" ><rect x="0" y="0" width="6.2" height="6.2" rx="1.3"/><rect x="11.8" y="0" width="6.2" height="6.2" rx="1.3"/><rect x="6.4" y="8.8" width="6.2" height="6.2" rx="1.3"/><path d="M5 3.1H13M4.4 5 8.3 10.2" fill="none" stroke="currentColor" stroke-width="2"/></svg>
<span class="t " style="left:510px;top:153.3px;font-size:13.2px;color:#4f4f4f;">プロジェクト</span>
<div class="a" style="left:1437px;top:151px;width:42px;height:30px;background:#6c757d;border-radius:5.5px"></div>
<svg class="i" style="left:1451.6px;top:157.4px;color:#fff" width="13.7" height="13.7" viewBox="0 0 16 16" fill="currentColor" preserveAspectRatio="xMidYMid meet" ><rect x="0" y="1.5" width="3" height="3" rx=".7"/><rect x="0" y="6.5" width="3" height="3" rx=".7"/><rect x="0" y="11.5" width="3" height="3" rx=".7"/><rect x="5" y="2" width="11" height="2" rx="1"/><rect x="5" y="7" width="11" height="2" rx="1"/><rect x="5" y="12" width="11" height="2" rx="1"/></svg>
<div class="a" style="left:1488px;top:151px;width:41.8px;height:30px;background:#fff;border:1px solid #dee2e6;border-radius:5.5px"></div>
<svg class="i" style="left:1502px;top:157.3px;color:#5a5a5a" width="13.7" height="13.7" viewBox="0 0 16 16" fill="currentColor" preserveAspectRatio="xMidYMid meet" ><path fill-rule="evenodd" d="M2 1.5H14a2 2 0 0 1 2 2V12.5a2 2 0 0 1-2 2H2a2 2 0 0 1-2-2V3.5A2 2 0 0 1 2 1.5ZM2 5.5V12.5H7V5.5ZM9 5.5V12.5H14V5.5Z"/></svg>
<div class="hl" style="left:222px;top:190px;width:1320px;background:#dee2e6"></div>
<span class="t " style="left:234.5px;top:194px;font-size:13.2px;color:#6c757d;">ステータス:</span>
<div class="a" style="left:318px;top:192px;width:81px;height:29px;background:#fff;border:1px solid #dee2e6;border-radius:6.6px"></div>
<span class="t " style="left:330px;top:193.8px;font-size:13.2px;color:#444;">全て</span>
<div class="a" style="left:361.3px;top:197px;width:25.4px;height:17px;background:#6c757d;border-radius:7px"></div>
<span class="t b" style="left:361.3px;width:25.4px;text-align:center;top:193.9px;font-size:11.2px;color:#fff;letter-spacing:-.6px">61</span>
<div class="a" style="left:406px;top:192px;width:94.7px;height:29px;background:#fff;border:1px solid #dee2e6;border-radius:6.6px"></div>
<span class="t " style="left:418px;top:193.8px;font-size:13.2px;color:#555;">未着手</span>
<div class="a" style="left:462px;top:197px;width:26.8px;height:17px;background:#6c757d;border-radius:7px"></div>
<span class="t b" style="left:462px;width:26.8px;text-align:center;top:193.9px;font-size:11.2px;color:#fff;letter-spacing:-.6px">39</span>
<div class="a" style="left:507px;top:192px;width:94.8px;height:29px;background:#fff;border:1px solid #1a73e8;border-radius:6.6px"></div>
<span class="t " style="left:519px;top:193.8px;font-size:13.2px;color:#1a73e8;">進行中</span>
<div class="a" style="left:563.8px;top:197px;width:26.2px;height:17px;background:#0d6efd;border-radius:7px"></div>
<span class="t b" style="left:563.8px;width:26.2px;text-align:center;top:193.9px;font-size:11.2px;color:#fff;letter-spacing:-.6px">13</span>
<div class="a" style="left:609px;top:192px;width:73.7px;height:29px;background:#fff;border:1px solid #198754;border-radius:6.6px"></div>
<span class="t " style="left:621px;top:193.8px;font-size:13.2px;color:#198754;">完了</span>
<div class="a" style="left:651.8px;top:197px;width:19.4px;height:17px;background:#198754;border-radius:7px"></div>
<span class="t b" style="left:651.8px;width:19.4px;text-align:center;top:193.9px;font-size:11.2px;color:#fff;letter-spacing:-.6px">9</span>
<span class="t " style="left:700.3px;top:194px;font-size:13.2px;color:#6c757d;">| プロジェクト:</span>
<div class="a" style="left:805px;top:191.5px;width:254.5px;height:30px;background:#fff;border:1px solid #dee2e6;border-radius:5px"></div>
<span class="t " style="left:816px;top:194px;font-size:13.2px;color:#212529;">全て</span>
<svg class="i" style="left:1030.7px;top:200px;color:#333" width="12.5" height="13" viewBox="0 0 512 512" fill="currentColor" preserveAspectRatio="xMidYMid meet" ><path d="M233.4 406.6c12.5 12.5 32.8 12.5 45.3 0l192-192c12.5-12.5 12.5-32.8 0-45.3s-32.8-12.5-45.3 0L256 338.7 86.6 169.4c-12.5-12.5-32.8-12.5-45.3 0s-12.5 32.8 0 45.3l192 192z"/></svg>
<div class="hl" style="left:222px;top:231px;width:1320px;background:#dee2e6"></div>
<div class="a" style="left:222px;top:232px;width:1304px;height:32px;background:#f5f5f5"></div>
<div class="hl" style="left:222px;top:264px;width:1304px;background:#dee2e6"></div>
<span class="t " style="left:270px;top:234.7px;font-size:15.4px;color:#6c757d;">タスク名</span>
<span class="t " style="left:949.8px;top:234.7px;font-size:15.4px;color:#6c757d;">優先度</span>
<span class="t " style="left:1059.5px;top:234.7px;font-size:15.4px;color:#6c757d;">プロジェクト</span>
<span class="t " style="left:1214.3px;top:234.7px;font-size:15.4px;color:#6c757d;">期限</span>
<span class="t " style="left:1324.5px;top:234.7px;font-size:15.4px;color:#6c757d;">進捗</span>
<span class="t " style="left:1457.5px;top:234.7px;font-size:15.4px;color:#6c757d;">操作</span>
<div class="hl" style="left:222px;top:305px;width:1304px;background:#dee2e6"></div>
<div class="a" style="left:1458px;top:268px;width:35px;height:34px;border:1px solid #6c757d;border-radius:4.4px;background:#fff"></div>
<svg class="i" style="left:1467.2px;top:276.9px;color:#6c757d" width="15.2" height="15.2" viewBox="0 0 16 16" fill="currentColor" preserveAspectRatio="xMidYMid meet" ><path d="M12.3 1.1a1.9 1.9 0 0 1 2.6 0l.500.5a1.9 1.9 0 0 1 0 2.6l-.900.9-3.1-3.1ZM10.5 2.9 13.6 6 8.2 11.4a2 2 0 0 1-.900.5L4.7 12.6a.6.6 0 0 1-.8-.8L4.6 9.2a2 2 0 0 1 .500-.900Z"/><path d="M7 2.8H3A2.3 2.3 0 0 0 .7 5.1V13A2.3 2.3 0 0 0 3 15.3H11A2.3 2.3 0 0 0 13.3 13V9.5" fill="none" stroke="currentColor" stroke-width="1.7" stroke-linecap="round"/></svg>
<svg class="i" style="left:234px;top:275px" width="15" height="15" viewBox="0 0 15 15"><rect x="1.1" y=".4" width="13" height="13.2" rx="2.3" fill="#a94ac7"/><path d="M3.6 7.3 6.3 9.9 11.2 3.9" fill="none" stroke="#fff" stroke-width="2"/></svg>
<span class="t " style="left:270px;top:272.6px;font-size:15.4px;color:#198754;word-spacing:.6px">新規リード100件獲得</span>
<span class="bd" style="left:950px;top:276px;width:26px;height:19.6px;line-height:19.3px;font-size:12px;background:#dc3545;color:#fff;-webkit-text-stroke:.25px #fff">高</span>
<span class="bd" style="left:1060px;top:276px;width:96.8px;height:19.6px;line-height:19.3px;font-size:11.8px;letter-spacing:-.3px;background:#ff0000;border-radius:8px;-webkit-text-stroke:.3px #fff">営業推進プロ...</span>
<span class="t " style="left:1214.5px;top:273px;font-size:15.4px;color:#495057;">03/07</span>
<div class="a" style="left:1325px;top:282px;width:67.3px;height:6px;background:#e9ecef;border-radius:3px"></div>
<div class="a" style="left:1325px;top:282px;width:67.3px;height:6px;background:#198754;border-radius:3px"></div>
<span class="t " style="left:1401.8px;top:273px;font-size:13.2px;color:#6c757d;">100%</span>
<div class="hl" style="left:222px;top:347px;width:1304px;background:#dee2e6"></div>
<div class="a" style="left:1458px;top:310px;width:35px;height:34px;border:1px solid #6c757d;border-radius:4.4px;background:#fff"></div>
<svg class="i" style="left:1467.2px;top:318.9px;color:#6c757d" width="15.2" height="15.2" viewBox="0 0 16 16" fill="currentColor" preserveAspectRatio="xMidYMid meet" ><path d="M12.3 1.1a1.9 1.9 0 0 1 2.6 0l.500.5a1.9 1.9 0 0 1 0 2.6l-.900.9-3.1-3.1ZM10.5 2.9 13.6 6 8.2 11.4a2 2 0 0 1-.900.5L4.7 12.6a.6.6 0 0 1-.8-.8L4.6 9.2a2 2 0 0 1 .500-.900Z"/><path d="M7 2.8H3A2.3 2.3 0 0 0 .7 5.1V13A2.3 2.3 0 0 0 3 15.3H11A2.3 2.3 0 0 0 13.3 13V9.5" fill="none" stroke="currentColor" stroke-width="1.7" stroke-linecap="round"/></svg>
<svg class="i" style="left:234px;top:317px" width="15" height="15" viewBox="0 0 15 15"><rect x="1.1" y=".4" width="13" height="13.2" rx="2.3" fill="#a94ac7"/><path d="M3.6 7.3 6.3 9.9 11.2 3.9" fill="none" stroke="#fff" stroke-width="2"/></svg>
<span class="t " style="left:270px;top:314.21px;font-size:15.4px;color:#198754;word-spacing:.6px">テレアポリスト作成</span>
<span class="bd" style="left:950px;top:318px;width:26px;height:19.6px;line-height:19.3px;font-size:12px;background:#ffc107;color:#212529;-webkit-text-stroke:.25px #212529">中</span>
<span class="bd" style="left:1060px;top:318px;width:96.8px;height:19.6px;line-height:19.3px;font-size:11.8px;letter-spacing:-.3px;background:#ff0000;border-radius:8px;-webkit-text-stroke:.3px #fff">営業推進プロ...</span>
<span class="t " style="left:1214.5px;top:314.61px;font-size:15.4px;color:#495057;">02/25</span>
<div class="a" style="left:1325px;top:324px;width:67.3px;height:6px;background:#e9ecef;border-radius:3px"></div>
<div class="a" style="left:1325px;top:324px;width:67.3px;height:6px;background:#198754;border-radius:3px"></div>
<span class="t " style="left:1401.8px;top:314.61px;font-size:13.2px;color:#6c757d;">100%</span>
<div class="hl" style="left:222px;top:389px;width:1304px;background:#dee2e6"></div>
<div class="a" style="left:1458px;top:351px;width:35px;height:34px;border:1px solid #6c757d;border-radius:4.4px;background:#fff"></div>
<svg class="i" style="left:1467.2px;top:359.9px;color:#6c757d" width="15.2" height="15.2" viewBox="0 0 16 16" fill="currentColor" preserveAspectRatio="xMidYMid meet" ><path d="M12.3 1.1a1.9 1.9 0 0 1 2.6 0l.500.5a1.9 1.9 0 0 1 0 2.6l-.900.9-3.1-3.1ZM10.5 2.9 13.6 6 8.2 11.4a2 2 0 0 1-.900.5L4.7 12.6a.6.6 0 0 1-.8-.8L4.6 9.2a2 2 0 0 1 .500-.900Z"/><path d="M7 2.8H3A2.3 2.3 0 0 0 .7 5.1V13A2.3 2.3 0 0 0 3 15.3H11A2.3 2.3 0 0 0 13.3 13V9.5" fill="none" stroke="currentColor" stroke-width="1.7" stroke-linecap="round"/></svg>
<svg class="i" style="left:234px;top:358px" width="15" height="15" viewBox="0 0 15 15"><rect x="1.7" y="1" width="11.8" height="12" rx="2.6" fill="#fff" stroke="#767676" stroke-width="1.2"/></svg>
<span class="t " style="left:270px;top:355.82px;font-size:15.4px;color:#0d6efd;word-spacing:.6px">提案書テンプレート改訂</span>
<span class="bd" style="left:950px;top:360px;width:26px;height:19.6px;line-height:19.3px;font-size:12px;background:#ffc107;color:#212529;-webkit-text-stroke:.25px #212529">中</span>
<span class="bd" style="left:1060px;top:360px;width:96.8px;height:19.6px;line-height:19.3px;font-size:11.8px;letter-spacing:-.3px;background:#ff0000;border-radius:8px;-webkit-text-stroke:.3px #fff">営業推進プロ...</span>
<span class="t " style="left:1214.5px;top:356.22px;font-size:15.4px;color:#495057;">03/05</span>
<div class="a" style="left:1325px;top:365px;width:73px;height:6px;background:#e9ecef;border-radius:3px"></div>
<div class="a" style="left:1325px;top:365px;width:51.1px;height:6px;background:#0d6efd;border-radius:3px 0 0 3px"></div>
<span class="t " style="left:1407.3px;top:356.22px;font-size:13.2px;color:#6c757d;">70%</span>
<div class="hl" style="left:222px;top:430px;width:1304px;background:#dee2e6"></div>
<div class="a" style="left:1458px;top:393px;width:35px;height:34px;border:1px solid #6c757d;border-radius:4.4px;background:#fff"></div>
<svg class="i" style="left:1467.2px;top:401.9px;color:#6c757d" width="15.2" height="15.2" viewBox="0 0 16 16" fill="currentColor" preserveAspectRatio="xMidYMid meet" ><path d="M12.3 1.1a1.9 1.9 0 0 1 2.6 0l.500.5a1.9 1.9 0 0 1 0 2.6l-.900.9-3.1-3.1ZM10.5 2.9 13.6 6 8.2 11.4a2 2 0 0 1-.900.5L4.7 12.6a.6.6 0 0 1-.8-.8L4.6 9.2a2 2 0 0 1 .500-.900Z"/><path d="M7 2.8H3A2.3 2.3 0 0 0 .7 5.1V13A2.3 2.3 0 0 0 3 15.3H11A2.3 2.3 0 0 0 13.3 13V9.5" fill="none" stroke="currentColor" stroke-width="1.7" stroke-linecap="round"/></svg>
<svg class="i" style="left:234px;top:400px" width="15" height="15" viewBox="0 0 15 15"><rect x="1.1" y=".4" width="13" height="13.2" rx="2.3" fill="#a94ac7"/><path d="M3.6 7.3 6.3 9.9 11.2 3.9" fill="none" stroke="#fff" stroke-width="2"/></svg>
<span class="t " style="left:270px;top:397.43px;font-size:15.4px;color:#198754;word-spacing:.6px">山田商事 商談（初回）</span>
<span class="bd" style="left:950px;top:401px;width:26px;height:19.6px;line-height:19.3px;font-size:12px;background:#dc3545;color:#fff;-webkit-text-stroke:.25px #fff">高</span>
<span class="bd" style="left:1060px;top:401px;width:96.8px;height:19.6px;line-height:19.3px;font-size:11.8px;letter-spacing:-.3px;background:#ff0000;border-radius:8px;-webkit-text-stroke:.3px #fff">営業推進プロ...</span>
<span class="t " style="left:1214.5px;top:397.83px;font-size:15.4px;color:#495057;">03/01</span>
<div class="a" style="left:1325px;top:407px;width:67.3px;height:6px;background:#e9ecef;border-radius:3px"></div>
<div class="a" style="left:1325px;top:407px;width:67.3px;height:6px;background:#198754;border-radius:3px"></div>
<span class="t " style="left:1401.8px;top:397.83px;font-size:13.2px;color:#6c757d;">100%</span>
<div class="hl" style="left:222px;top:472px;width:1304px;background:#dee2e6"></div>
<div class="a" style="left:1458px;top:434px;width:35px;height:34px;border:1px solid #6c757d;border-radius:4.4px;background:#fff"></div>
<svg class="i" style="left:1467.2px;top:442.9px;color:#6c757d" width="15.2" height="15.2" viewBox="0 0 16 16" fill="currentColor" preserveAspectRatio="xMidYMid meet" ><path d="M12.3 1.1a1.9 1.9 0 0 1 2.6 0l.500.5a1.9 1.9 0 0 1 0 2.6l-.900.9-3.1-3.1ZM10.5 2.9 13.6 6 8.2 11.4a2 2 0 0 1-.900.5L4.7 12.6a.6.6 0 0 1-.8-.8L4.6 9.2a2 2 0 0 1 .500-.900Z"/><path d="M7 2.8H3A2.3 2.3 0 0 0 .7 5.1V13A2.3 2.3 0 0 0 3 15.3H11A2.3 2.3 0 0 0 13.3 13V9.5" fill="none" stroke="currentColor" stroke-width="1.7" stroke-linecap="round"/></svg>
<svg class="i" style="left:234px;top:441px" width="15" height="15" viewBox="0 0 15 15"><rect x="1.7" y="1" width="11.8" height="12" rx="2.6" fill="#fff" stroke="#767676" stroke-width="1.2"/></svg>
<span class="t " style="left:270px;top:439.04px;font-size:15.4px;color:#0d6efd;word-spacing:.6px">山田商事 見積提出</span>
<span class="bd" style="left:950px;top:443px;width:26px;height:19.6px;line-height:19.3px;font-size:12px;background:#dc3545;color:#fff;-webkit-text-stroke:.25px #fff">高</span>
<span class="bd" style="left:1060px;top:443px;width:96.8px;height:19.6px;line-height:19.3px;font-size:11.8px;letter-spacing:-.3px;background:#ff0000;border-radius:8px;-webkit-text-stroke:.3px #fff">営業推進プロ...</span>
<span class="t " style="left:1214.5px;top:439.44px;font-size:15.4px;color:#495057;">03/07</span>
<div class="a" style="left:1325px;top:448px;width:73px;height:6px;background:#e9ecef;border-radius:3px"></div>
<div class="a" style="left:1325px;top:448px;width:43.8px;height:6px;background:#0d6efd;border-radius:3px 0 0 3px"></div>
<span class="t " style="left:1407.3px;top:439.44px;font-size:13.2px;color:#6c757d;">60%</span>
<div class="hl" style="left:222px;top:513px;width:1304px;background:#dee2e6"></div>
<div class="a" style="left:1458px;top:476px;width:35px;height:34px;border:1px solid #6c757d;border-radius:4.4px;background:#fff"></div>
<svg class="i" style="left:1467.2px;top:484.9px;color:#6c757d" width="15.2" height="15.2" viewBox="0 0 16 16" fill="currentColor" preserveAspectRatio="xMidYMid meet" ><path d="M12.3 1.1a1.9 1.9 0 0 1 2.6 0l.500.5a1.9 1.9 0 0 1 0 2.6l-.900.9-3.1-3.1ZM10.5 2.9 13.6 6 8.2 11.4a2 2 0 0 1-.900.5L4.7 12.6a.6.6 0 0 1-.8-.8L4.6 9.2a2 2 0 0 1 .500-.900Z"/><path d="M7 2.8H3A2.3 2.3 0 0 0 .7 5.1V13A2.3 2.3 0 0 0 3 15.3H11A2.3 2.3 0 0 0 13.3 13V9.5" fill="none" stroke="currentColor" stroke-width="1.7" stroke-linecap="round"/></svg>
<svg class="i" style="left:234px;top:483px" width="15" height="15" viewBox="0 0 15 15"><rect x="1.7" y="1" width="11.8" height="12" rx="2.6" fill="#fff" stroke="#767676" stroke-width="1.2"/></svg>
<span class="t " style="left:270px;top:480.65px;font-size:15.4px;color:#6c757d;word-spacing:.6px">テクノソリューションズ フォロー訪問</span>
<span class="bd" style="left:950px;top:484px;width:26px;height:19.6px;line-height:19.3px;font-size:12px;background:#dc3545;color:#fff;-webkit-text-stroke:.25px #fff">高</span>
<span class="bd" style="left:1060px;top:484px;width:96.8px;height:19.6px;line-height:19.3px;font-size:11.8px;letter-spacing:-.3px;background:#ff0000;border-radius:8px;-webkit-text-stroke:.3px #fff">営業推進プロ...</span>
<span class="t " style="left:1214.5px;top:481.05px;font-size:15.4px;color:#495057;">03/14</span>
<div class="a" style="left:1325px;top:490px;width:73px;height:6px;background:#e9ecef;border-radius:3px"></div>
<span class="t " style="left:1407.3px;top:481.05px;font-size:13.2px;color:#6c757d;">0%</span>
<div class="hl" style="left:222px;top:555px;width:1304px;background:#dee2e6"></div>
<div class="a" style="left:1458px;top:518px;width:35px;height:34px;border:1px solid #6c757d;border-radius:4.4px;background:#fff"></div>
<svg class="i" style="left:1467.2px;top:526.9px;color:#6c757d" width="15.2" height="15.2" viewBox="0 0 16 16" fill="currentColor" preserveAspectRatio="xMidYMid meet" ><path d="M12.3 1.1a1.9 1.9 0 0 1 2.6 0l.500.5a1.9 1.9 0 0 1 0 2.6l-.900.9-3.1-3.1ZM10.5 2.9 13.6 6 8.2 11.4a2 2 0 0 1-.900.5L4.7 12.6a.6.6 0 0 1-.8-.8L4.6 9.2a2 2 0 0 1 .500-.900Z"/><path d="M7 2.8H3A2.3 2.3 0 0 0 .7 5.1V13A2.3 2.3 0 0 0 3 15.3H11A2.3 2.3 0 0 0 13.3 13V9.5" fill="none" stroke="currentColor" stroke-width="1.7" stroke-linecap="round"/></svg>
<svg class="i" style="left:234px;top:525px" width="15" height="15" viewBox="0 0 15 15"><rect x="1.7" y="1" width="11.8" height="12" rx="2.6" fill="#fff" stroke="#767676" stroke-width="1.2"/></svg>
<span class="t " style="left:270px;top:522.26px;font-size:15.4px;color:#6c757d;word-spacing:.6px">月次営業報告書作成</span>
<span class="bd" style="left:950px;top:526px;width:26px;height:19.6px;line-height:19.3px;font-size:12px;background:#0d6efd;color:#fff;-webkit-text-stroke:.25px #fff">低</span>
<span class="bd" style="left:1060px;top:526px;width:96.8px;height:19.6px;line-height:19.3px;font-size:11.8px;letter-spacing:-.3px;background:#ff0000;border-radius:8px;-webkit-text-stroke:.3px #fff">営業推進プロ...</span>
<span class="t " style="left:1214.5px;top:522.66px;font-size:15.4px;color:#495057;">03/31</span>
<div class="a" style="left:1325px;top:532px;width:73px;height:6px;background:#e9ecef;border-radius:3px"></div>
<span class="t " style="left:1407.3px;top:522.66px;font-size:13.2px;color:#6c757d;">0%</span>
<div class="hl" style="left:222px;top:597px;width:1304px;background:#dee2e6"></div>
<div class="a" style="left:1458px;top:559px;width:35px;height:34px;border:1px solid #6c757d;border-radius:4.4px;background:#fff"></div>
<svg class="i" style="left:1467.2px;top:567.9px;color:#6c757d" width="15.2" height="15.2" viewBox="0 0 16 16" fill="currentColor" preserveAspectRatio="xMidYMid meet" ><path d="M12.3 1.1a1.9 1.9 0 0 1 2.6 0l.500.5a1.9 1.9 0 0 1 0 2.6l-.900.9-3.1-3.1ZM10.5 2.9 13.6 6 8.2 11.4a2 2 0 0 1-.900.5L4.7 12.6a.6.6 0 0 1-.8-.8L4.6 9.2a2 2 0 0 1 .500-.900Z"/><path d="M7 2.8H3A2.3 2.3 0 0 0 .7 5.1V13A2.3 2.3 0 0 0 3 15.3H11A2.3 2.3 0 0 0 13.3 13V9.5" fill="none" stroke="currentColor" stroke-width="1.7" stroke-linecap="round"/></svg>
<svg class="i" style="left:234px;top:566px" width="15" height="15" viewBox="0 0 15 15"><rect x="1.1" y=".4" width="13" height="13.2" rx="2.3" fill="#a94ac7"/><path d="M3.6 7.3 6.3 9.9 11.2 3.9" fill="none" stroke="#fff" stroke-width="2"/></svg>
<span class="t " style="left:270px;top:563.87px;font-size:15.4px;color:#198754;word-spacing:.6px">ターゲット企業リスト作成</span>
<span class="bd" style="left:950px;top:568px;width:26px;height:19.6px;line-height:19.3px;font-size:12px;background:#dc3545;color:#fff;-webkit-text-stroke:.25px #fff">高</span>
<span class="bd" style="left:1060px;top:568px;width:61.8px;height:19.6px;line-height:19.3px;font-size:11.8px;letter-spacing:-.3px;background:#1f5fe6;border-radius:8px;-webkit-text-stroke:.3px #fff">代行営業</span>
<span class="t " style="left:1214.5px;top:564.27px;font-size:15.4px;color:#495057;">02/28</span>
<div class="a" style="left:1325px;top:573px;width:67.3px;height:6px;background:#e9ecef;border-radius:3px"></div>
<div class="a" style="left:1325px;top:573px;width:67.3px;height:6px;background:#198754;border-radius:3px"></div>
<span class="t " style="left:1401.8px;top:564.27px;font-size:13.2px;color:#6c757d;">100%</span>
<div class="hl" style="left:222px;top:638px;width:1304px;background:#dee2e6"></div>
<div class="a" style="left:1458px;top:601px;width:35px;height:34px;border:1px solid #6c757d;border-radius:4.4px;background:#fff"></div>
<svg class="i" style="left:1467.2px;top:609.9px;color:#6c757d" width="15.2" height="15.2" viewBox="0 0 16 16" fill="currentColor" preserveAspectRatio="xMidYMid meet" ><path d="M12.3 1.1a1.9 1.9 0 0 1 2.6 0l.500.5a1.9 1.9 0 0 1 0 2.6l-.900.9-3.1-3.1ZM10.5 2.9 13.6 6 8.2 11.4a2 2 0 0 1-.900.5L4.7 12.6a.6.6 0 0 1-.8-.8L4.6 9.2a2 2 0 0 1 .500-.900Z"/><path d="M7 2.8H3A2.3 2.3 0 0 0 .7 5.1V13A2.3 2.3 0 0 0 3 15.3H11A2.3 2.3 0 0 0 13.3 13V9.5" fill="none" stroke="currentColor" stroke-width="1.7" stroke-linecap="round"/></svg>
<svg class="i" style="left:234px;top:608px" width="15" height="15" viewBox="0 0 15 15"><rect x="1.1" y=".4" width="13" height="13.2" rx="2.3" fill="#a94ac7"/><path d="M3.6 7.3 6.3 9.9 11.2 3.9" fill="none" stroke="#fff" stroke-width="2"/></svg>
<span class="t " style="left:270px;top:605.48px;font-size:15.4px;color:#198754;word-spacing:.6px">アプローチメール文面作成</span>
<span class="bd" style="left:950px;top:609px;width:26px;height:19.6px;line-height:19.3px;font-size:12px;background:#ffc107;color:#212529;-webkit-text-stroke:.25px #212529">中</span>
<span class="bd" style="left:1060px;top:609px;width:61.8px;height:19.6px;line-height:19.3px;font-size:11.8px;letter-spacing:-.3px;background:#1f5fe6;border-radius:8px;-webkit-text-stroke:.3px #fff">代行営業</span>
<span class="t " style="left:1214.5px;top:605.88px;font-size:15.4px;color:#495057;">03/01</span>
<div class="a" style="left:1325px;top:615px;width:67.3px;height:6px;background:#e9ecef;border-radius:3px"></div>
<div class="a" style="left:1325px;top:615px;width:67.3px;height:6px;background:#198754;border-radius:3px"></div>
<span class="t " style="left:1401.8px;top:605.88px;font-size:13.2px;color:#6c757d;">100%</span>
<div class="hl" style="left:222px;top:680px;width:1304px;background:#dee2e6"></div>
<div class="a" style="left:1458px;top:642px;width:35px;height:34px;border:1px solid #6c757d;border-radius:4.4px;background:#fff"></div>
<svg class="i" style="left:1467.2px;top:650.9px;color:#6c757d" width="15.2" height="15.2" viewBox="0 0 16 16" fill="currentColor" preserveAspectRatio="xMidYMid meet" ><path d="M12.3 1.1a1.9 1.9 0 0 1 2.6 0l.500.5a1.9 1.9 0 0 1 0 2.6l-.900.9-3.1-3.1ZM10.5 2.9 13.6 6 8.2 11.4a2 2 0 0 1-.900.5L4.7 12.6a.6.6 0 0 1-.8-.8L4.6 9.2a2 2 0 0 1 .500-.900Z"/><path d="M7 2.8H3A2.3 2.3 0 0 0 .7 5.1V13A2.3 2.3 0 0 0 3 15.3H11A2.3 2.3 0 0 0 13.3 13V9.5" fill="none" stroke="currentColor" stroke-width="1.7" stroke-linecap="round"/></svg>
<svg class="i" style="left:234px;top:649px" width="15" height="15" viewBox="0 0 15 15"><rect x="1.7" y="1" width="11.8" height="12" rx="2.6" fill="#fff" stroke="#767676" stroke-width="1.2"/></svg>
<span class="t " style="left:270px;top:647.09px;font-size:15.4px;color:#0d6efd;word-spacing:.6px">第1弾メール配信（50社）</span>
<span class="bd" style="left:950px;top:651px;width:26px;height:19.6px;line-height:19.3px;font-size:12px;background:#dc3545;color:#fff;-webkit-text-stroke:.25px #fff">高</span>
<span class="bd" style="left:1060px;top:651px;width:61.8px;height:19.6px;line-height:19.3px;font-size:11.8px;letter-spacing:-.3px;background:#1f5fe6;border-radius:8px;-webkit-text-stroke:.3px #fff">代行営業</span>
<span class="t " style="left:1214.5px;top:647.49px;font-size:15.4px;color:#495057;">03/07</span>
<div class="a" style="left:1325px;top:656px;width:73px;height:6px;background:#e9ecef;border-radius:3px"></div>
<div class="a" style="left:1325px;top:656px;width:58.4px;height:6px;background:#0d6efd;border-radius:3px 0 0 3px"></div>
<span class="t " style="left:1407.3px;top:647.49px;font-size:13.2px;color:#6c757d;">80%</span>
<div class="hl" style="left:222px;top:722px;width:1304px;background:#dee2e6"></div>
<div class="a" style="left:1458px;top:684px;width:35px;height:34px;border:1px solid #6c757d;border-radius:4.4px;background:#fff"></div>
<svg class="i" style="left:1467.2px;top:692.9px;color:#6c757d" width="15.2" height="15.2" viewBox="0 0 16 16" fill="currentColor" preserveAspectRatio="xMidYMid meet" ><path d="M12.3 1.1a1.9 1.9 0 0 1 2.6 0l.500.5a1.9 1.9 0 0 1 0 2.6l-.900.9-3.1-3.1ZM10.5 2.9 13.6 6 8.2 11.4a2 2 0 0 1-.900.5L4.7 12.6a.6.6 0 0 1-.8-.8L4.6 9.2a2 2 0 0 1 .500-.900Z"/><path d="M7 2.8H3A2.3 2.3 0 0 0 .7 5.1V13A2.3 2.3 0 0 0 3 15.3H11A2.3 2.3 0 0 0 13.3 13V9.5" fill="none" stroke="currentColor" stroke-width="1.7" stroke-linecap="round"/></svg>
<svg class="i" style="left:234px;top:691px" width="15" height="15" viewBox="0 0 15 15"><rect x="1.7" y="1" width="11.8" height="12" rx="2.6" fill="#fff" stroke="#767676" stroke-width="1.2"/></svg>
<span class="t " style="left:270px;top:688.7px;font-size:15.4px;color:#6c757d;word-spacing:.6px">返信対応・商談設定</span>
<span class="bd" style="left:950px;top:693px;width:26px;height:19.6px;line-height:19.3px;font-size:12px;background:#dc3545;color:#fff;-webkit-text-stroke:.25px #fff">高</span>
<span class="bd" style="left:1060px;top:693px;width:61.8px;height:19.6px;line-height:19.3px;font-size:11.8px;letter-spacing:-.3px;background:#1f5fe6;border-radius:8px;-webkit-text-stroke:.3px #fff">代行営業</span>
<span class="t " style="left:1214.5px;top:689.1px;font-size:15.4px;color:#495057;">03/21</span>
<div class="a" style="left:1325px;top:698px;width:73px;height:6px;background:#e9ecef;border-radius:3px"></div>
<span class="t " style="left:1407.3px;top:689.1px;font-size:13.2px;color:#6c757d;">0%</span>
<div class="hl" style="left:222px;top:763px;width:1304px;background:#dee2e6"></div>
<div class="a" style="left:1458px;top:726px;width:35px;height:34px;border:1px solid #6c757d;border-radius:4.4px;background:#fff"></div>
<svg class="i" style="left:1467.2px;top:734.9px;color:#6c757d" width="15.2" height="15.2" viewBox="0 0 16 16" fill="currentColor" preserveAspectRatio="xMidYMid meet" ><path d="M12.3 1.1a1.9 1.9 0 0 1 2.6 0l.500.5a1.9 1.9 0 0 1 0 2.6l-.900.9-3.1-3.1ZM10.5 2.9 13.6 6 8.2 11.4a2 2 0 0 1-.900.5L4.7 12.6a.6.6 0 0 1-.8-.8L4.6 9.2a2 2 0 0 1 .500-.900Z"/><path d="M7 2.8H3A2.3 2.3 0 0 0 .7 5.1V13A2.3 2.3 0 0 0 3 15.3H11A2.3 2.3 0 0 0 13.3 13V9.5" fill="none" stroke="currentColor" stroke-width="1.7" stroke-linecap="round"/></svg>
<svg class="i" style="left:234px;top:733px" width="15" height="15" viewBox="0 0 15 15"><rect x="1.7" y="1" width="11.8" height="12" rx="2.6" fill="#fff" stroke="#767676" stroke-width="1.2"/></svg>
<span class="t " style="left:270px;top:730.31px;font-size:15.4px;color:#6c757d;word-spacing:.6px">第2弾メール配信（50社）</span>
<span class="bd" style="left:950px;top:734px;width:26px;height:19.6px;line-height:19.3px;font-size:12px;background:#ffc107;color:#212529;-webkit-text-stroke:.25px #212529">中</span>
<span class="bd" style="left:1060px;top:734px;width:61.8px;height:19.6px;line-height:19.3px;font-size:11.8px;letter-spacing:-.3px;background:#1f5fe6;border-radius:8px;-webkit-text-stroke:.3px #fff">代行営業</span>
<span class="t " style="left:1214.5px;top:730.71px;font-size:15.4px;color:#495057;">03/20</span>
<div class="a" style="left:1325px;top:740px;width:73px;height:6px;background:#e9ecef;border-radius:3px"></div>
<span class="t " style="left:1407.3px;top:730.71px;font-size:13.2px;color:#6c757d;">0%</span>
<div class="hl" style="left:222px;top:805px;width:1304px;background:#dee2e6"></div>
<div class="a" style="left:1458px;top:767px;width:35px;height:34px;border:1px solid #6c757d;border-radius:4.4px;background:#fff"></div>
<svg class="i" style="left:1467.2px;top:775.9px;color:#6c757d" width="15.2" height="15.2" viewBox="0 0 16 16" fill="currentColor" preserveAspectRatio="xMidYMid meet" ><path d="M12.3 1.1a1.9 1.9 0 0 1 2.6 0l.500.5a1.9 1.9 0 0 1 0 2.6l-.900.9-3.1-3.1ZM10.5 2.9 13.6 6 8.2 11.4a2 2 0 0 1-.900.5L4.7 12.6a.6.6 0 0 1-.8-.8L4.6 9.2a2 2 0 0 1 .500-.900Z"/><path d="M7 2.8H3A2.3 2.3 0 0 0 .7 5.1V13A2.3 2.3 0 0 0 3 15.3H11A2.3 2.3 0 0 0 13.3 13V9.5" fill="none" stroke="currentColor" stroke-width="1.7" stroke-linecap="round"/></svg>
<svg class="i" style="left:234px;top:774px" width="15" height="15" viewBox="0 0 15 15"><rect x="1.7" y="1" width="11.8" height="12" rx="2.6" fill="#fff" stroke="#767676" stroke-width="1.2"/></svg>
<span class="t " style="left:270px;top:771.92px;font-size:15.4px;color:#6c757d;word-spacing:.6px">オンラインデモ実施（5社）</span>
<span class="bd" style="left:950px;top:776px;width:26px;height:19.6px;line-height:19.3px;font-size:12px;background:#dc3545;color:#fff;-webkit-text-stroke:.25px #fff">高</span>
<span class="bd" style="left:1060px;top:776px;width:61.8px;height:19.6px;line-height:19.3px;font-size:11.8px;letter-spacing:-.3px;background:#1f5fe6;border-radius:8px;-webkit-text-stroke:.3px #fff">代行営業</span>
<span class="t " style="left:1214.5px;top:772.32px;font-size:15.4px;color:#495057;">04/04</span>
<div class="a" style="left:1325px;top:781px;width:73px;height:6px;background:#e9ecef;border-radius:3px"></div>
<span class="t " style="left:1407.3px;top:772.32px;font-size:13.2px;color:#6c757d;">0%</span>
<div class="hl" style="left:222px;top:846px;width:1304px;background:#dee2e6"></div>
<div class="a" style="left:1458px;top:809px;width:35px;height:34px;border:1px solid #6c757d;border-radius:4.4px;background:#fff"></div>
<svg class="i" style="left:1467.2px;top:817.9px;color:#6c757d" width="15.2" height="15.2" viewBox="0 0 16 16" fill="currentColor" preserveAspectRatio="xMidYMid meet" ><path d="M12.3 1.1a1.9 1.9 0 0 1 2.6 0l.500.5a1.9 1.9 0 0 1 0 2.6l-.900.9-3.1-3.1ZM10.5 2.9 13.6 6 8.2 11.4a2 2 0 0 1-.900.5L4.7 12.6a.6.6 0 0 1-.8-.8L4.6 9.2a2 2 0 0 1 .500-.900Z"/><path d="M7 2.8H3A2.3 2.3 0 0 0 .7 5.1V13A2.3 2.3 0 0 0 3 15.3H11A2.3 2.3 0 0 0 13.3 13V9.5" fill="none" stroke="currentColor" stroke-width="1.7" stroke-linecap="round"/></svg>
<svg class="i" style="left:234px;top:816px" width="15" height="15" viewBox="0 0 15 15"><rect x="1.7" y="1" width="11.8" height="12" rx="2.6" fill="#fff" stroke="#767676" stroke-width="1.2"/></svg>
<span class="t " style="left:270px;top:813.53px;font-size:15.4px;color:#6c757d;word-spacing:.6px">クロージング活動</span>
<span class="bd" style="left:950px;top:817px;width:26px;height:19.6px;line-height:19.3px;font-size:12px;background:#dc3545;color:#fff;-webkit-text-stroke:.25px #fff">高</span>
<span class="bd" style="left:1060px;top:817px;width:61.8px;height:19.6px;line-height:19.3px;font-size:11.8px;letter-spacing:-.3px;background:#1f5fe6;border-radius:8px;-webkit-text-stroke:.3px #fff">代行営業</span>
<span class="t " style="left:1214.5px;top:813.93px;font-size:15.4px;color:#495057;">04/25</span>
<div class="a" style="left:1325px;top:823px;width:73px;height:6px;background:#e9ecef;border-radius:3px"></div>
<span class="t " style="left:1407.3px;top:813.93px;font-size:13.2px;color:#6c757d;">0%</span>
<div class="hl" style="left:222px;top:888px;width:1304px;background:#dee2e6"></div>
<div class="a" style="left:1458px;top:851px;width:35px;height:34px;border:1px solid #6c757d;border-radius:4.4px;background:#fff"></div>
<svg class="i" style="left:1467.2px;top:859.9px;color:#6c757d" width="15.2" height="15.2" viewBox="0 0 16 16" fill="currentColor" preserveAspectRatio="xMidYMid meet" ><path d="M12.3 1.1a1.9 1.9 0 0 1 2.6 0l.500.5a1.9 1.9 0 0 1 0 2.6l-.900.9-3.1-3.1ZM10.5 2.9 13.6 6 8.2 11.4a2 2 0 0 1-.900.5L4.7 12.6a.6.6 0 0 1-.8-.8L4.6 9.2a2 2 0 0 1 .500-.900Z"/><path d="M7 2.8H3A2.3 2.3 0 0 0 .7 5.1V13A2.3 2.3 0 0 0 3 15.3H11A2.3 2.3 0 0 0 13.3 13V9.5" fill="none" stroke="currentColor" stroke-width="1.7" stroke-linecap="round"/></svg>
<svg class="i" style="left:234px;top:858px" width="15" height="15" viewBox="0 0 15 15"><rect x="1.7" y="1" width="11.8" height="12" rx="2.6" fill="#fff" stroke="#767676" stroke-width="1.2"/></svg>
<span class="t " style="left:270px;top:855.14px;font-size:15.4px;color:#6c757d;word-spacing:.6px">月次レポート・成果報告</span>
<span class="bd" style="left:950px;top:859px;width:26px;height:19.6px;line-height:19.3px;font-size:12px;background:#0d6efd;color:#fff;-webkit-text-stroke:.25px #fff">低</span>
<span class="bd" style="left:1060px;top:859px;width:61.8px;height:19.6px;line-height:19.3px;font-size:11.8px;letter-spacing:-.3px;background:#1f5fe6;border-radius:8px;-webkit-text-stroke:.3px #fff">代行営業</span>
<span class="t " style="left:1214.5px;top:855.54px;font-size:15.4px;color:#495057;">04/30</span>
<div class="a" style="left:1325px;top:865px;width:73px;height:6px;background:#e9ecef;border-radius:3px"></div>
<span class="t " style="left:1407.3px;top:855.54px;font-size:13.2px;color:#6c757d;">0%</span>
<div class="hl" style="left:222px;top:930px;width:1304px;background:#dee2e6"></div>
<div class="a" style="left:1458px;top:892px;width:35px;height:34px;border:1px solid #6c757d;border-radius:4.4px;background:#fff"></div>
<svg class="i" style="left:1467.2px;top:900.9px;color:#6c757d" width="15.2" height="15.2" viewBox="0 0 16 16" fill="currentColor" preserveAspectRatio="xMidYMid meet" ><path d="M12.3 1.1a1.9 1.9 0 0 1 2.6 0l.500.5a1.9 1.9 0 0 1 0 2.6l-.900.9-3.1-3.1ZM10.5 2.9 13.6 6 8.2 11.4a2 2 0 0 1-.900.5L4.7 12.6a.6.6 0 0 1-.8-.8L4.6 9.2a2 2 0 0 1 .500-.900Z"/><path d="M7 2.8H3A2.3 2.3 0 0 0 .7 5.1V13A2.3 2.3 0 0 0 3 15.3H11A2.3 2.3 0 0 0 13.3 13V9.5" fill="none" stroke="currentColor" stroke-width="1.7" stroke-linecap="round"/></svg>
<svg class="i" style="left:234px;top:899px" width="15" height="15" viewBox="0 0 15 15"><rect x="1.1" y=".4" width="13" height="13.2" rx="2.3" fill="#a94ac7"/><path d="M3.6 7.3 6.3 9.9 11.2 3.9" fill="none" stroke="#fff" stroke-width="2"/></svg>
<span class="t " style="left:270px;top:896.75px;font-size:15.4px;color:#198754;word-spacing:.6px">要件定義書作成</span>
<span class="bd" style="left:950px;top:901px;width:26px;height:19.6px;line-height:19.3px;font-size:12px;background:#dc3545;color:#fff;-webkit-text-stroke:.25px #fff">高</span>
<span class="bd" style="left:1060px;top:901px;width:99.5px;height:19.6px;line-height:19.3px;font-size:11.8px;letter-spacing:-.3px;background:#ec9400;border-radius:8px;-webkit-text-stroke:.3px #fff">A<span style="font-family:'DejaVu Sans Mono',monospace;margin-left:-1.1px;letter-spacing:-1.1px">I</span>開発プロジ...</span>
<span class="t " style="left:1214.5px;top:897.15px;font-size:15.4px;color:#495057;">03/03</span>
<div class="a" style="left:1325px;top:906px;width:67.3px;height:6px;background:#e9ecef;border-radius:3px"></div>
<div class="a" style="left:1325px;top:906px;width:67.3px;height:6px;background:#198754;border-radius:3px"></div>
<span class="t " style="left:1401.8px;top:897.15px;font-size:13.2px;color:#6c757d;">100%</span>
<div class="hl" style="left:222px;top:971px;width:1304px;background:#dee2e6"></div>
<div class="a" style="left:1458px;top:934px;width:35px;height:34px;border:1px solid #6c757d;border-radius:4.4px;background:#fff"></div>
<svg class="i" style="left:1467.2px;top:942.9px;color:#6c757d" width="15.2" height="15.2" viewBox="0 0 16 16" fill="currentColor" preserveAspectRatio="xMidYMid meet" ><path d="M12.3 1.1a1.9 1.9 0 0 1 2.6 0l.500.5a1.9 1.9 0 0 1 0 2.6l-.900.9-3.1-3.1ZM10.5 2.9 13.6 6 8.2 11.4a2 2 0 0 1-.900.5L4.7 12.6a.6.6 0 0 1-.8-.8L4.6 9.2a2 2 0 0 1 .500-.900Z"/><path d="M7 2.8H3A2.3 2.3 0 0 0 .7 5.1V13A2.3 2.3 0 0 0 3 15.3H11A2.3 2.3 0 0 0 13.3 13V9.5" fill="none" stroke="currentColor" stroke-width="1.7" stroke-linecap="round"/></svg>
<svg class="i" style="left:234px;top:941px" width="15" height="15" viewBox="0 0 15 15"><rect x="1.7" y="1" width="11.8" height="12" rx="2.6" fill="#fff" stroke="#767676" stroke-width="1.2"/></svg>
<span class="t " style="left:270px;top:938.36px;font-size:15.4px;color:#0d6efd;word-spacing:.6px">U<span style="font-family:'DejaVu Sans Mono',monospace;margin-left:-1.3px;letter-spacing:-1.3px">I</span>/UXデザイン</span>
<span class="bd" style="left:950px;top:942px;width:26px;height:19.6px;line-height:19.3px;font-size:12px;background:#dc3545;color:#fff;-webkit-text-stroke:.25px #fff">高</span>
<span class="bd" style="left:1060px;top:942px;width:99.5px;height:19.6px;line-height:19.3px;font-size:11.8px;letter-spacing:-.3px;background:#ec9400;border-radius:8px;-webkit-text-stroke:.3px #fff">A<span style="font-family:'DejaVu Sans Mono',monospace;margin-left:-1.1px;letter-spacing:-1.1px">I</span>開発プロジ...</span>
<span class="t " style="left:1214.5px;top:938.76px;font-size:15.4px;color:#495057;">03/14</span>
<div class="a" style="left:1325px;top:948px;width:73px;height:6px;background:#e9ecef;border-radius:3px"></div>
<div class="a" style="left:1325px;top:948px;width:47.5px;height:6px;background:#0d6efd;border-radius:3px 0 0 3px"></div>
<span class="t " style="left:1407.3px;top:938.76px;font-size:13.2px;color:#6c757d;">65%</span>
<div class="hl" style="left:222px;top:1013px;width:1304px;background:#dee2e6"></div>
<div class="a" style="left:1458px;top:975px;width:35px;height:34px;border:1px solid #6c757d;border-radius:4.4px;background:#fff"></div>
<svg class="i" style="left:1467.2px;top:983.9px;color:#6c757d" width="15.2" height="15.2" viewBox="0 0 16 16" fill="currentColor" preserveAspectRatio="xMidYMid meet" ><path d="M12.3 1.1a1.9 1.9 0 0 1 2.6 0l.500.5a1.9 1.9 0 0 1 0 2.6l-.900.9-3.1-3.1ZM10.5 2.9 13.6 6 8.2 11.4a2 2 0 0 1-.900.5L4.7 12.6a.6.6 0 0 1-.8-.8L4.6 9.2a2 2 0 0 1 .500-.900Z"/><path d="M7 2.8H3A2.3 2.3 0 0 0 .7 5.1V13A2.3 2.3 0 0 0 3 15.3H11A2.3 2.3 0 0 0 13.3 13V9.5" fill="none" stroke="currentColor" stroke-width="1.7" stroke-linecap="round"/></svg>
<svg class="i" style="left:234px;top:982px" width="15" height="15" viewBox="0 0 15 15"><rect x="1.7" y="1" width="11.8" height="12" rx="2.6" fill="#fff" stroke="#767676" stroke-width="1.2"/></svg>
<span class="t " style="left:270px;top:979.97px;font-size:15.4px;color:#0d6efd;word-spacing:.6px">A<span style="font-family:'DejaVu Sans Mono',monospace;margin-left:-1.3px;letter-spacing:-1.3px">I</span>分析エンジン プロトタイプ</span>
<span class="bd" style="left:950px;top:984px;width:26px;height:19.6px;line-height:19.3px;font-size:12px;background:#dc3545;color:#fff;-webkit-text-stroke:.25px #fff">高</span>
<span class="bd" style="left:1060px;top:984px;width:99.5px;height:19.6px;line-height:19.3px;font-size:11.8px;letter-spacing:-.3px;background:#ec9400;border-radius:8px;-webkit-text-stroke:.3px #fff">A<span style="font-family:'DejaVu Sans Mono',monospace;margin-left:-1.1px;letter-spacing:-1.1px">I</span>開発プロジ...</span>
<span class="t " style="left:1214.5px;top:980.37px;font-size:15.4px;color:#495057;">03/25</span>
<div class="a" style="left:1325px;top:989px;width:73px;height:6px;background:#e9ecef;border-radius:3px"></div>
<div class="a" style="left:1325px;top:989px;width:29.2px;height:6px;background:#0d6efd;border-radius:3px 0 0 3px"></div>
<span class="t " style="left:1407.3px;top:980.37px;font-size:13.2px;color:#6c757d;">40%</span>
<div class="hl" style="left:222px;top:1054px;width:1304px;background:#dee2e6"></div>
<div class="a" style="left:1458px;top:1017px;width:35px;height:34px;border:1px solid #6c757d;border-radius:4.4px;background:#fff"></div>
<svg class="i" style="left:1467.2px;top:1025.9px;color:#6c757d" width="15.2" height="15.2" viewBox="0 0 16 16" fill="currentColor" preserveAspectRatio="xMidYMid meet" ><path d="M12.3 1.1a1.9 1.9 0 0 1 2.6 0l.500.5a1.9 1.9 0 0 1 0 2.6l-.900.9-3.1-3.1ZM10.5 2.9 13.6 6 8.2 11.4a2 2 0 0 1-.900.5L4.7 12.6a.6.6 0 0 1-.8-.8L4.6 9.2a2 2 0 0 1 .500-.900Z"/><path d="M7 2.8H3A2.3 2.3 0 0 0 .7 5.1V13A2.3 2.3 0 0 0 3 15.3H11A2.3 2.3 0 0 0 13.3 13V9.5" fill="none" stroke="currentColor" stroke-width="1.7" stroke-linecap="round"/></svg>
<svg class="i" style="left:234px;top:1024px" width="15" height="15" viewBox="0 0 15 15"><rect x="1.7" y="1" width="11.8" height="12" rx="2.6" fill="#fff" stroke="#767676" stroke-width="1.2"/></svg>
<span class="t " style="left:270px;top:1021.58px;font-size:15.4px;color:#6c757d;word-spacing:.6px">AP<span style="font-family:'DejaVu Sans Mono',monospace;margin-left:-1.3px;letter-spacing:-1.3px">I</span>エンドポイント実装</span>
<span class="bd" style="left:950px;top:1025px;width:26px;height:19.6px;line-height:19.3px;font-size:12px;background:#dc3545;color:#fff;-webkit-text-stroke:.25px #fff">高</span>
<span class="bd" style="left:1060px;top:1025px;width:99.5px;height:19.6px;line-height:19.3px;font-size:11.8px;letter-spacing:-.3px;background:#ec9400;border-radius:8px;-webkit-text-stroke:.3px #fff">A<span style="font-family:'DejaVu Sans Mono',monospace;margin-left:-1.1px;letter-spacing:-1.1px">I</span>開発プロジ...</span>
<span class="t " style="left:1214.5px;top:1021.98px;font-size:15.4px;color:#495057;">04/05</span>
<div class="a" style="left:1325px;top:1031px;width:73px;height:6px;background:#e9ecef;border-radius:3px"></div>
<span class="t " style="left:1407.3px;top:1021.98px;font-size:13.2px;color:#6c757d;">0%</span>
<div class="hl" style="left:222px;top:1096px;width:1304px;background:#dee2e6"></div>
<div class="a" style="left:1458px;top:1059px;width:35px;height:34px;border:1px solid #6c757d;border-radius:4.4px;background:#fff"></div>
<svg class="i" style="left:1467.2px;top:1067.9px;color:#6c757d" width="15.2" height="15.2" viewBox="0 0 16 16" fill="currentColor" preserveAspectRatio="xMidYMid meet" ><path d="M12.3 1.1a1.9 1.9 0 0 1 2.6 0l.500.5a1.9 1.9 0 0 1 0 2.6l-.900.9-3.1-3.1ZM10.5 2.9 13.6 6 8.2 11.4a2 2 0 0 1-.900.5L4.7 12.6a.6.6 0 0 1-.8-.8L4.6 9.2a2 2 0 0 1 .500-.900Z"/><path d="M7 2.8H3A2.3 2.3 0 0 0 .7 5.1V13A2.3 2.3 0 0 0 3 15.3H11A2.3 2.3 0 0 0 13.3 13V9.5" fill="none" stroke="currentColor" stroke-width="1.7" stroke-linecap="round"/></svg>
<svg class="i" style="left:234px;top:1066px" width="15" height="15" viewBox="0 0 15 15"><rect x="1.7" y="1" width="11.8" height="12" rx="2.6" fill="#fff" stroke="#767676" stroke-width="1.2"/></svg>
<span class="t " style="left:270px;top:1063.19px;font-size:15.4px;color:#6c757d;word-spacing:.6px">フロントエンド実装</span>
<span class="bd" style="left:950px;top:1067px;width:26px;height:19.6px;line-height:19.3px;font-size:12px;background:#ffc107;color:#212529;-webkit-text-stroke:.25px #212529">中</span>
<span class="bd" style="left:1060px;top:1067px;width:99.5px;height:19.6px;line-height:19.3px;font-size:11.8px;letter-spacing:-.3px;background:#ec9400;border-radius:8px;-webkit-text-stroke:.3px #fff">A<span style="font-family:'DejaVu Sans Mono',monospace;margin-left:-1.1px;letter-spacing:-1.1px">I</span>開発プロジ...</span>
<span class="t " style="left:1214.5px;top:1063.59px;font-size:15.4px;color:#495057;">04/15</span>
<div class="a" style="left:1325px;top:1073px;width:73px;height:6px;background:#e9ecef;border-radius:3px"></div>
<span class="t " style="left:1407.3px;top:1063.59px;font-size:13.2px;color:#6c757d;">0%</span>
<div class="hl" style="left:222px;top:1138px;width:1304px;background:#dee2e6"></div>
<div class="a" style="left:1458px;top:1100px;width:35px;height:34px;border:1px solid #6c757d;border-radius:4.4px;background:#fff"></div>
<svg class="i" style="left:1467.2px;top:1108.9px;color:#6c757d" width="15.2" height="15.2" viewBox="0 0 16 16" fill="currentColor" preserveAspectRatio="xMidYMid meet" ><path d="M12.3 1.1a1.9 1.9 0 0 1 2.6 0l.500.5a1.9 1.9 0 0 1 0 2.6l-.900.9-3.1-3.1ZM10.5 2.9 13.6 6 8.2 11.4a2 2 0 0 1-.900.5L4.7 12.6a.6.6 0 0 1-.8-.8L4.6 9.2a2 2 0 0 1 .500-.900Z"/><path d="M7 2.8H3A2.3 2.3 0 0 0 .7 5.1V13A2.3 2.3 0 0 0 3 15.3H11A2.3 2.3 0 0 0 13.3 13V9.5" fill="none" stroke="currentColor" stroke-width="1.7" stroke-linecap="round"/></svg>
<svg class="i" style="left:234px;top:1107px" width="15" height="15" viewBox="0 0 15 15"><rect x="1.7" y="1" width="11.8" height="12" rx="2.6" fill="#fff" stroke="#767676" stroke-width="1.2"/></svg>
<span class="t " style="left:270px;top:1104.8px;font-size:15.4px;color:#6c757d;word-spacing:.6px">テストケース作成・実施</span>
<span class="bd" style="left:950px;top:1109px;width:26px;height:19.6px;line-height:19.3px;font-size:12px;background:#ffc107;color:#212529;-webkit-text-stroke:.25px #212529">中</span>
<span class="bd" style="left:1060px;top:1109px;width:99.5px;height:19.6px;line-height:19.3px;font-size:11.8px;letter-spacing:-.3px;background:#ec9400;border-radius:8px;-webkit-text-stroke:.3px #fff">A<span style="font-family:'DejaVu Sans Mono',monospace;margin-left:-1.1px;letter-spacing:-1.1px">I</span>開発プロジ...</span>
<span class="t " style="left:1214.5px;top:1105.2px;font-size:15.4px;color:#495057;">04/30</span>
<div class="a" style="left:1325px;top:1114px;width:73px;height:6px;background:#e9ecef;border-radius:3px"></div>
<span class="t " style="left:1407.3px;top:1105.2px;font-size:13.2px;color:#6c757d;">0%</span>
<div class="hl" style="left:222px;top:1179px;width:1304px;background:#dee2e6"></div>
<div class="a" style="left:1458px;top:1142px;width:35px;height:34px;border:1px solid #6c757d;border-radius:4.4px;background:#fff"></div>
<svg class="i" style="left:1467.2px;top:1150.9px;color:#6c757d" width="15.2" height="15.2" viewBox="0 0 16 16" fill="currentColor" preserveAspectRatio="xMidYMid meet" ><path d="M12.3 1.1a1.9 1.9 0 0 1 2.6 0l.500.5a1.9 1.9 0 0 1 0 2.6l-.900.9-3.1-3.1ZM10.5 2.9 13.6 6 8.2 11.4a2 2 0 0 1-.900.5L4.7 12.6a.6.6 0 0 1-.8-.8L4.6 9.2a2 2 0 0 1 .500-.900Z"/><path d="M7 2.8H3A2.3 2.3 0 0 0 .7 5.1V13A2.3 2.3 0 0 0 3 15.3H11A2.3 2.3 0 0 0 13.3 13V9.5" fill="none" stroke="currentColor" stroke-width="1.7" stroke-linecap="round"/></svg>
<svg class="i" style="left:234px;top:1149px" width="15" height="15" viewBox="0 0 15 15"><rect x="1.7" y="1" width="11.8" height="12" rx="2.6" fill="#fff" stroke="#767676" stroke-width="1.2"/></svg>
<span class="t " style="left:270px;top:1146.41px;font-size:15.4px;color:#6c757d;word-spacing:.6px">セキュリティ監査</span>
<span class="bd" style="left:950px;top:1150px;width:26px;height:19.6px;line-height:19.3px;font-size:12px;background:#dc3545;color:#fff;-webkit-text-stroke:.25px #fff">高</span>
<span class="bd" style="left:1060px;top:1150px;width:99.5px;height:19.6px;line-height:19.3px;font-size:11.8px;letter-spacing:-.3px;background:#ec9400;border-radius:8px;-webkit-text-stroke:.3px #fff">A<span style="font-family:'DejaVu Sans Mono',monospace;margin-left:-1.1px;letter-spacing:-1.1px">I</span>開発プロジ...</span>
<span class="t " style="left:1214.5px;top:1146.81px;font-size:15.4px;color:#495057;">05/15</span>
<div class="a" style="left:1325px;top:1156px;width:73px;height:6px;background:#e9ecef;border-radius:3px"></div>
<span class="t " style="left:1407.3px;top:1146.81px;font-size:13.2px;color:#6c757d;">0%</span>
<div class="a" style="left:1458px;top:1183px;width:35px;height:34px;border:1px solid #6c757d;border-radius:4.4px;background:#fff"></div>
<svg class="i" style="left:1467.2px;top:1191.9px;color:#6c757d" width="15.2" height="15.2" viewBox="0 0 16 16" fill="currentColor" preserveAspectRatio="xMidYMid meet" ><path d="M12.3 1.1a1.9 1.9 0 0 1 2.6 0l.500.5a1.9 1.9 0 0 1 0 2.6l-.900.9-3.1-3.1ZM10.5 2.9 13.6 6 8.2 11.4a2 2 0 0 1-.900.5L4.7 12.6a.6.6 0 0 1-.8-.8L4.6 9.2a2 2 0 0 1 .500-.900Z"/><path d="M7 2.8H3A2.3 2.3 0 0 0 .7 5.1V13A2.3 2.3 0 0 0 3 15.3H11A2.3 2.3 0 0 0 13.3 13V9.5" fill="none" stroke="currentColor" stroke-width="1.7" stroke-linecap="round"/></svg>
</main>
<div class="a" style="left:1526px;top:232px;width:16px;height:958px;background:#fcfcfc"></div>
<svg class="i" style="left:1529px;top:237px" width="11" height="8" viewBox="0 0 11 8"><path d="M5.5 .8 10.6 7.2H.4Z" fill="#8a8a8a"/></svg>
<svg class="i" style="left:1529px;top:1179px" width="11" height="8" viewBox="0 0 11 8"><path d="M5.5 7.2 10.6 .8H.4Z" fill="#8a8a8a"/></svg>
<div class="a" style="left:1530px;top:252px;width:9px;height:342px;background:#8b8b8b;border-radius:4.5px"></div>
<div class="a" style="left:1542px;top:0px;width:1px;height:1191px;background:#1d5080"></div>
<div class="a" style="left:0px;top:1189.5px;width:1543px;height:1.5px;background:#1d5080"></div>
<svg class="i" style="left:0;top:1183px" width="7" height="8" viewBox="0 0 7 8"><path d="M0 0V8H7V6.5H5.5A4.5 4.5 0 0 1 1 2V0Z" fill="#1d5080"/></svg>
<svg class="i" style="left:1536px;top:1183px" width="7" height="8" viewBox="0 0 7 8"><path d="M7 0V8H0V6.5H1.5A4.5 4.5 0 0 0 6 2V0Z" fill="#1d5080"/></svg>
</div></body></html>
